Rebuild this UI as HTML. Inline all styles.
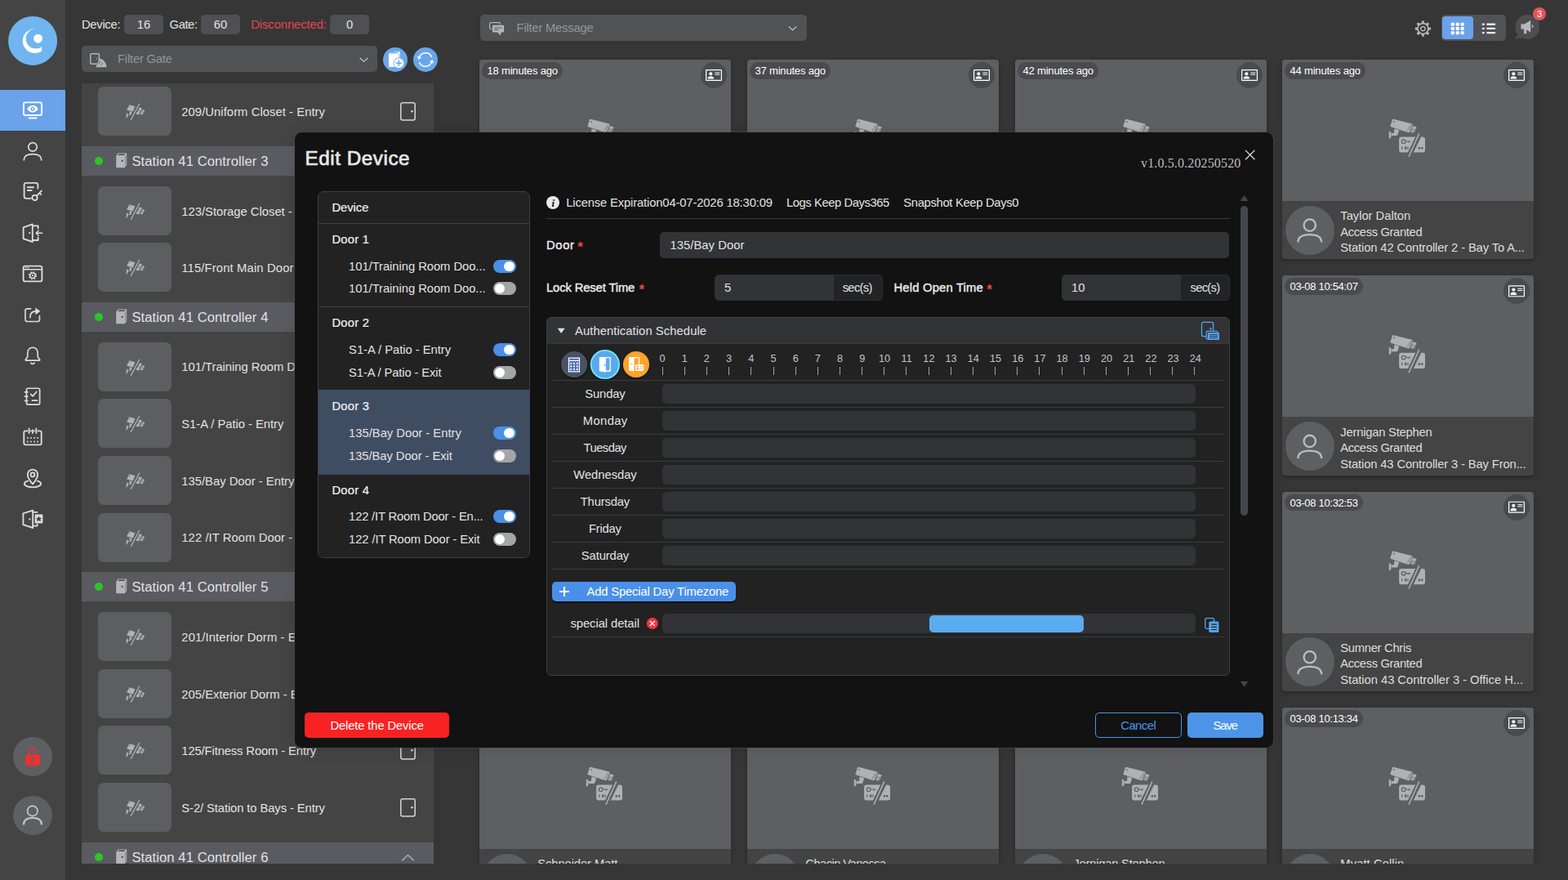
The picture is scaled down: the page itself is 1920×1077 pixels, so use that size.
<!DOCTYPE html>
<html lang="en"><head><meta charset="utf-8"><title>Edit Device</title>
<style>
*{box-sizing:border-box;margin:0;padding:0}
html,body{width:1920px;height:1077px;overflow:hidden;background:#363636}
body{position:relative;font-family:"Liberation Sans",sans-serif;color:#e2e2e2}
.a{position:absolute}
.t{white-space:nowrap}
svg{display:block;overflow:visible}
</style></head><body>
<div class="a" style="left:0px;top:0px;width:80px;height:1077px;background:#444444;"></div>
<svg class="a" style="left:10px;top:20px;" width="60" height="60" viewBox="0 0 60 60"><defs><clipPath id="lc"><rect x="0" y="0" width="41.15" height="60"/></clipPath></defs><circle cx="30.1" cy="29.9" r="30" fill="#70b5f0"/><circle cx="32.7" cy="30.1" r="14.95" fill="#ffffff" clip-path="url(#lc)"/><circle cx="33.87" cy="27.3" r="12.2" fill="#70b5f0"/><circle cx="36.6" cy="27.2" r="5.5" fill="#ffffff"/></svg>
<div class="a" style="left:0px;top:110px;width:80px;height:50px;background:#6aa3ea;"></div>
<svg class="a" style="left:26px;top:121px;" width="28" height="28" viewBox="0 0 28 28"><rect x="2.9" y="4.4" width="22.2" height="15.6" rx="2" fill="none" stroke="#ffffff" stroke-width="1.9" stroke-linecap="round" stroke-linejoin="round" /><path d="M9.5 23.4H18.5" fill="none" stroke="#ffffff" stroke-width="2" stroke-linecap="round" stroke-linejoin="round" /><path d="M7.2 12.2C9.2 8.9 11.6 8 14 8s4.8 0.9 6.8 4.2C18.8 15.5 16.4 16.4 14 16.4S9.2 15.5 7.2 12.2Z" fill="#ffffff"/><circle cx="14" cy="12.2" r="2.5" fill="#6aa3ea"/><circle cx="14" cy="12.2" r="1.1" fill="#ffffff"/></svg>
<svg class="a" style="left:26px;top:171px;" width="28" height="28" viewBox="0 0 28 28"><circle cx="14" cy="8.9" r="5.2" fill="none" stroke="#dcdcdc" stroke-width="1.7" stroke-linecap="round" stroke-linejoin="round" /><path d="M3.3 24.8C3.3 19.3 8 17.6 14 17.6S24.7 19.3 24.7 24.8" fill="none" stroke="#dcdcdc" stroke-width="1.7" stroke-linecap="round" stroke-linejoin="round" /></svg>
<svg class="a" style="left:26px;top:221px;" width="28" height="28" viewBox="0 0 28 28"><path d="M20.4 9.5V5.2a2.4 2.4 0 0 0-2.4-2.4H6a2.4 2.4 0 0 0-2.4 2.4V19.4a2.4 2.4 0 0 0 2.4 2.4H11.8" fill="none" stroke="#dcdcdc" stroke-width="1.85" stroke-linecap="round" stroke-linejoin="round" /><path d="M7.8 8.3H15M7.8 12H12.6" fill="none" stroke="#dcdcdc" stroke-width="2" stroke-linecap="round" stroke-linejoin="round" /><circle cx="16.6" cy="21" r="3.1" fill="none" stroke="#dcdcdc" stroke-width="1.85" stroke-linecap="round" stroke-linejoin="round" /><path d="M18.9 18.8L25 12.4M22.3 15.2l2 1.9" fill="none" stroke="#dcdcdc" stroke-width="1.85" stroke-linecap="round" stroke-linejoin="round" /></svg>
<svg class="a" style="left:26px;top:271px;" width="28" height="28" viewBox="0 0 28 28"><path d="M2.6 7.4L13.8 3.4V25L2.6 21.2Z" fill="none" stroke="#dcdcdc" stroke-width="1.85" stroke-linecap="round" stroke-linejoin="round" /><circle cx="10.3" cy="14.2" r="1.1" fill="#dcdcdc"/><path d="M13.8 5.4H20.6V8.6M20.6 19.6V23H13.8" fill="none" stroke="#dcdcdc" stroke-width="1.85" stroke-linecap="round" stroke-linejoin="round" /><path d="M25.8 14.2H18.2M21.2 11.2L18.2 14.2L21.2 17.2" fill="none" stroke="#dcdcdc" stroke-width="1.5" stroke-linecap="round" stroke-linejoin="round" /></svg>
<svg class="a" style="left:26px;top:321px;" width="28" height="28" viewBox="0 0 28 28"><rect x="2.6" y="4.6" width="22.8" height="18.8" rx="2.2" fill="none" stroke="#dcdcdc" stroke-width="1.85" stroke-linecap="round" stroke-linejoin="round" /><path d="M2.6 8.8H25.4" fill="none" stroke="#dcdcdc" stroke-width="1.5" stroke-linecap="round" stroke-linejoin="round" /><path d="M5.4 6.6h1M8.2 6.6h1" fill="none" stroke="#dcdcdc" stroke-width="1.2" stroke-linecap="round" stroke-linejoin="round" /><circle cx="14" cy="16.2" r="4.1" fill="none" stroke="#dcdcdc" stroke-width="2" stroke-dasharray="1.7 1.52"/><circle cx="14" cy="16.2" r="3.1" fill="none" stroke="#dcdcdc" stroke-width="1.3" stroke-linecap="round" stroke-linejoin="round" /><circle cx="14" cy="16.2" r="1.1" fill="#dcdcdc"/></svg>
<svg class="a" style="left:26px;top:371px;" width="28" height="28" viewBox="0 0 28 28"><g transform="translate(14 14.4) scale(0.9) translate(-14 -14)"><path d="M11.5 5.6H6.6a2.6 2.6 0 0 0-2.6 2.6V20.4a2.6 2.6 0 0 0 2.6 2.6H20.8a2.6 2.6 0 0 0 2.6-2.6V15.4" fill="none" stroke="#dcdcdc" stroke-width="1.85" stroke-linecap="round" stroke-linejoin="round" /><path d="M10.6 17.4C10.6 11.6 13.6 9 18.6 9" fill="none" stroke="#dcdcdc" stroke-width="1.9" stroke-linecap="round" stroke-linejoin="round" /><path d="M17.8 4.2L24.4 9L17.8 13.8Z" fill="#dcdcdc"/></g></svg>
<svg class="a" style="left:26px;top:421px;" width="28" height="28" viewBox="0 0 28 28"><g transform="translate(14 14) scale(0.9) translate(-14 -14)"><path d="M14 3.2c-4.4 0-6.9 3.4-6.9 7.6v4.4c0 1.6-1.5 2.8-2.7 4.2v1.4H23.6v-1.4c-1.2-1.4-2.7-2.6-2.7-4.2V10.8c0-4.2-2.5-7.6-6.9-7.6Z" fill="none" stroke="#dcdcdc" stroke-width="1.85" stroke-linecap="round" stroke-linejoin="round" /><path d="M11.6 24.2a2.5 1.8 0 0 0 4.8 0" fill="none" stroke="#dcdcdc" stroke-width="1.85" stroke-linecap="round" stroke-linejoin="round" /></g></svg>
<svg class="a" style="left:26px;top:471px;" width="28" height="28" viewBox="0 0 28 28"><g transform="translate(14 14) scale(0.92) translate(-14 -14)"><rect x="5.8" y="3.4" width="17.6" height="21.6" rx="2" fill="none" stroke="#dcdcdc" stroke-width="1.85" stroke-linecap="round" stroke-linejoin="round" /><path d="M3.6 8.4H7.4M3.6 14.2H7.4M3.6 20H7.4" fill="none" stroke="#dcdcdc" stroke-width="1.85" stroke-linecap="round" stroke-linejoin="round" /><path d="M11.4 11.2l2.6 2.6l5.2-5.8" fill="none" stroke="#dcdcdc" stroke-width="1.9" stroke-linecap="round" stroke-linejoin="round" /><path d="M13.4 19.6H20" fill="none" stroke="#dcdcdc" stroke-width="1.85" stroke-linecap="round" stroke-linejoin="round" /></g></svg>
<svg class="a" style="left:26px;top:521px;" width="28" height="28" viewBox="0 0 28 28"><path d="M7.4 6.4H5.4a2.1 2.1 0 0 0-2.1 2.1V21.3a2.1 2.1 0 0 0 2.1 2.1H22.6a2.1 2.1 0 0 0 2.1-2.1V8.5a2.1 2.1 0 0 0-2.1-2.1H20.6" fill="none" stroke="#dcdcdc" stroke-width="1.85" stroke-linecap="round" stroke-linejoin="round" /><path d="M9.6 3.4V9M18.4 3.4V9M14 5.2V9M11.8 6.4H12M16 6.4h0.2" fill="none" stroke="#dcdcdc" stroke-width="1.85" stroke-linecap="round" stroke-linejoin="round" /><circle cx="7.8" cy="15" r="1" fill="#dcdcdc"/><circle cx="11.9" cy="15" r="1" fill="#dcdcdc"/><circle cx="16.1" cy="15" r="1" fill="#dcdcdc"/><circle cx="20.2" cy="15" r="1" fill="#dcdcdc"/><circle cx="7.8" cy="19.6" r="1" fill="#dcdcdc"/><circle cx="11.9" cy="19.6" r="1" fill="#dcdcdc"/><circle cx="16.1" cy="19.6" r="1" fill="#dcdcdc"/><circle cx="20.2" cy="19.6" r="1" fill="#dcdcdc"/></svg>
<svg class="a" style="left:26px;top:571px;" width="28" height="28" viewBox="0 0 28 28"><path d="M14 21.4C10 17 7.8 13.4 7.8 9.8a6.2 6.2 0 0 1 12.4 0C20.2 13.4 18 17 14 21.4Z" fill="none" stroke="#dcdcdc" stroke-width="1.85" stroke-linecap="round" stroke-linejoin="round" /><circle cx="14" cy="9.9" r="2.5" fill="none" stroke="#dcdcdc" stroke-width="1.85" stroke-linecap="round" stroke-linejoin="round" /><path d="M8.2 17.6C5.6 18.4 3.8 19.7 3.8 21.1c0 2.4 4.6 4.2 10.2 4.2s10.2-1.8 10.2-4.2c0-1.4-1.8-2.7-4.4-3.5" fill="none" stroke="#dcdcdc" stroke-width="1.85" stroke-linecap="round" stroke-linejoin="round" /></svg>
<svg class="a" style="left:26px;top:621px;" width="28" height="28" viewBox="0 0 28 28"><path d="M2.4 7.4L14.2 3.6V25L2.4 21.2Z" fill="none" stroke="#dcdcdc" stroke-width="1.85" stroke-linecap="round" stroke-linejoin="round" /><circle cx="10.4" cy="14.4" r="1.1" fill="#dcdcdc"/><path d="M14.2 5.8H19.6M14.2 22.6H19.6V21" fill="none" stroke="#dcdcdc" stroke-width="1.85" stroke-linecap="round" stroke-linejoin="round" /><rect x="16.6" y="8.6" width="9.8" height="10.8" rx="1" fill="#dcdcdc"/><path d="M21.5 10.4l1.1 2.3l2.5 0.3l-1.8 1.7l0.5 2.5l-2.3-1.2l-2.3 1.2l0.5-2.5l-1.8-1.7l2.5-0.3Z" fill="#444444"/></svg>
<div class="a" style="left:16px;top:902px;width:48px;height:48px;background:#5e5f63;border-radius:24px;"></div>
<svg class="a" style="left:26px;top:911px;" width="28" height="28" viewBox="0 0 28 28"><path d="M9.9 13.4V8.9a3.95 3.95 0 0 1 7.9 0V13.4" fill="none" stroke="#ee3030" stroke-width="1.7"/><rect x="5" y="13" width="18.1" height="12.7" rx="2.6" fill="#ee3030"/><circle cx="13.9" cy="17.3" r="1.35" fill="#5e5f63"/><path d="M13.1 19h1.6l0.5 3.2h-2.6Z" fill="#5e5f63"/></svg>
<div class="a" style="left:16px;top:974px;width:48px;height:48px;background:#5e5f63;border-radius:24px;"></div>
<svg class="a" style="left:26px;top:984px;" width="28" height="28" viewBox="0 0 28 28"><circle cx="13.8" cy="8.5" r="6.2" fill="none" stroke="#c6c6c8" stroke-width="1.7"/><path d="M3 25.4C3 19.4 7.6 17 14 17S25 19.4 25 25.4" fill="none" stroke="#c6c6c8" stroke-width="2.2"/></svg>
<div class="a t" style="top:22px;font-size:14.78px;line-height:16px;color:#e2e2e2;letter-spacing:-0.292px;left:100px;">Device:</div>
<div class="a" style="left:152px;top:18px;width:48px;height:24px;background:#4f5054;border-radius:5px;"></div>
<div class="a t" style="top:22px;font-size:14.78px;line-height:16px;color:#e2e2e2;left:-24px;width:400px;text-align:center;">16</div>
<div class="a t" style="top:22px;font-size:14.78px;line-height:16px;color:#e2e2e2;letter-spacing:-0.431px;left:207.6px;">Gate:</div>
<div class="a" style="left:246px;top:18px;width:48px;height:24px;background:#4f5054;border-radius:5px;"></div>
<div class="a t" style="top:22px;font-size:14.78px;line-height:16px;color:#e2e2e2;left:70px;width:400px;text-align:center;">60</div>
<div class="a t" style="top:22px;font-size:14.78px;line-height:16px;color:#e8474a;letter-spacing:-0.065px;left:307.2px;">Disconnected:</div>
<div class="a" style="left:404px;top:18px;width:48px;height:24px;background:#4f5054;border-radius:5px;"></div>
<div class="a t" style="top:22px;font-size:14.78px;line-height:16px;color:#e2e2e2;left:228px;width:400px;text-align:center;">0</div>
<div class="a" style="left:100px;top:56px;width:362px;height:32px;background:#515256;border-radius:5px;"></div>
<svg class="a" style="left:110px;top:65px;" width="22" height="18" viewBox="0 0 22 18"><rect x="0.8" y="0.8" width="10.6" height="12.4" rx="1.2" fill="none" stroke="#b4b4b4" stroke-width="1.4" stroke-linecap="round" stroke-linejoin="round" /><circle cx="8.8" cy="6.8" r="0.8" fill="#b4b4b4"/><path d="M7.4 17.2L12.2 6.6C17 8 20 12 20.6 17.2Z" fill="#b4b4b4"/><path d="M10.6 14.2l2.6-5M14 15l1.6-3.4" stroke="#515256" stroke-width="0.8" fill="none"/></svg>
<div class="a t" style="top:64px;font-size:14.78px;line-height:16px;color:#949598;letter-spacing:-0.194px;left:144px;">Filter Gate</div>
<svg class="a" style="left:439px;top:70px;" width="13" height="8" viewBox="0 0 13 8"><g transform="translate(0.5 0)"><path d="M1.5 1.2L6 5.4L10.5 1.2" fill="none" stroke="#b8c6dc" stroke-width="1.25" stroke-linecap="round" stroke-linejoin="round"/></g></svg>
<svg class="a" style="left:469px;top:58px;" width="30" height="30" viewBox="0 0 30 30"><circle cx="15" cy="15" r="15" fill="#68a6ec"/><path d="M6.9 9a2.4 2.4 0 0 1 2-2.4L19 4.9a1.8 1.8 0 0 1 2 1.8V24H6.9Z" fill="#ffffff"/><path d="M9.6 7.1L18.6 6.3" stroke="#68a6ec" stroke-width="1.3"/><path d="M19.8 7.4V14" stroke="#68a6ec" stroke-width="0.9"/><circle cx="19.4" cy="19.2" r="6.3" fill="#ffffff" stroke="#68a6ec" stroke-width="0.9"/><path d="M15.6 19.2h7.6M19.4 15.4v7.6" stroke="#68a6ec" stroke-width="1.5"/></svg>
<svg class="a" style="left:506px;top:58px;" width="30" height="30" viewBox="0 0 30 30"><circle cx="15" cy="15" r="15" fill="#68a6ec"/><path d="M7.4 12.2A8.1 8.1 0 0 1 22.4 11.4" fill="none" stroke="#fff" stroke-width="1.5" stroke-linecap="round"/><path d="M22.6 17.8A8.1 8.1 0 0 1 7.6 18.6" fill="none" stroke="#fff" stroke-width="1.5" stroke-linecap="round"/><path d="M4.8 10.6L10 12.2L6.6 15.2Z" fill="#fff"/><path d="M25.2 19.4L20 17.8L23.4 14.8Z" fill="#fff"/></svg>
<div class="a" style="left:100px;top:102px;width:431px;height:955px;background:#444444;"></div>
<div class="a" style="left:120px;top:106px;width:90px;height:60px;background:#5d5e62;border-radius:7px;"></div>
<svg class="a" style="left:153px;top:126px;" width="25" height="22" viewBox="0 0 25 22"><g transform="translate(0.8 0.6)"><g fill="#b2b3b6"><path d="M4.4 1.6L11.6 3.6L9 9.8L1.4 8Z"/><path d="M4.6 9.6L7.8 10.4L6.6 14.2H3.4L1.6 17.8L0.6 17.6L1.2 11.8l1.2 0.4l0.6 1.2H5Z"/><path d="M17 4.6L20.2 5.8L16.2 13.8L12.6 12.8Z"/><path d="M20.8 7.4L23.4 8.6L20.4 14L17.8 13Z"/></g><path d="M16.8 0.6L6.6 19.8" stroke="#b2b3b6" stroke-width="1.2" stroke-linecap="round"/><circle cx="4.8" cy="3.8" r="0.6" fill="#5d5e62"/><path d="M16 7l-1.6 3.4M18 8l-1.4 3M21.2 9.6l-1.2 2.4" stroke="#5d5e62" stroke-width="0.7"/></g></svg>
<div class="a t" style="top:129px;font-size:14.78px;line-height:16px;color:#e2e2e2;letter-spacing:0.069px;left:222.3px;">209/Uniform Closet - Entry</div>
<svg class="a" style="left:490px;top:125px;" width="19" height="23" viewBox="0 0 19 23"><rect x="0.8" y="0.8" width="17.4" height="21.2" rx="2.2" fill="none" stroke="#d6d6d6" stroke-width="1.5" stroke-linecap="round" stroke-linejoin="round" /><circle cx="14.4" cy="11.3" r="1.3" fill="#d6d6d6"/></svg>
<div class="a" style="left:100px;top:179px;width:431px;height:36px;background:#5a5b61;"></div>
<div class="a" style="left:115.8px;top:191.7px;width:10.4px;height:10.4px;background:#2fc427;border-radius:5.2px;"></div>
<svg class="a" style="left:142px;top:187px;" width="14" height="19" viewBox="0 0 14 19"><path d="M0.2 4L2.6 0.5H13.2V14.8L10.6 18.2H1.2a1 1 0 0 1-1-1Z" fill="#b5b5b9"/><path d="M2.4 3L3.5 1.4H11.5L10.2 3Z" fill="#47484d"/><path d="M11.5 4L12.3 2.9V14.4L11.5 15.5Z" fill="#6a6b70"/><circle cx="7.7" cy="9.9" r="1.15" fill="#47484d"/></svg>
<div class="a t" style="top:188px;font-size:16.61px;line-height:19px;color:#e2e2e2;letter-spacing:0.078px;left:161.4px;">Station 41 Controller 3</div>
<div class="a" style="left:120px;top:228px;width:90px;height:60px;background:#5d5e62;border-radius:7px;"></div>
<svg class="a" style="left:153px;top:248px;" width="25" height="22" viewBox="0 0 25 22"><g transform="translate(0.8 0.6)"><g fill="#b2b3b6"><path d="M4.4 1.6L11.6 3.6L9 9.8L1.4 8Z"/><path d="M4.6 9.6L7.8 10.4L6.6 14.2H3.4L1.6 17.8L0.6 17.6L1.2 11.8l1.2 0.4l0.6 1.2H5Z"/><path d="M17 4.6L20.2 5.8L16.2 13.8L12.6 12.8Z"/><path d="M20.8 7.4L23.4 8.6L20.4 14L17.8 13Z"/></g><path d="M16.8 0.6L6.6 19.8" stroke="#b2b3b6" stroke-width="1.2" stroke-linecap="round"/><circle cx="4.8" cy="3.8" r="0.6" fill="#5d5e62"/><path d="M16 7l-1.6 3.4M18 8l-1.4 3M21.2 9.6l-1.2 2.4" stroke="#5d5e62" stroke-width="0.7"/></g></svg>
<div class="a t" style="top:251px;font-size:14.78px;line-height:16px;color:#e2e2e2;left:222.3px;">123/Storage Closet - Entry</div>
<svg class="a" style="left:490px;top:247px;" width="19" height="23" viewBox="0 0 19 23"><rect x="0.8" y="0.8" width="17.4" height="21.2" rx="2.2" fill="none" stroke="#d6d6d6" stroke-width="1.5" stroke-linecap="round" stroke-linejoin="round" /><circle cx="14.4" cy="11.3" r="1.3" fill="#d6d6d6"/></svg>
<div class="a" style="left:120px;top:297px;width:90px;height:60px;background:#5d5e62;border-radius:7px;"></div>
<svg class="a" style="left:153px;top:317px;" width="25" height="22" viewBox="0 0 25 22"><g transform="translate(0.8 0.6)"><g fill="#b2b3b6"><path d="M4.4 1.6L11.6 3.6L9 9.8L1.4 8Z"/><path d="M4.6 9.6L7.8 10.4L6.6 14.2H3.4L1.6 17.8L0.6 17.6L1.2 11.8l1.2 0.4l0.6 1.2H5Z"/><path d="M17 4.6L20.2 5.8L16.2 13.8L12.6 12.8Z"/><path d="M20.8 7.4L23.4 8.6L20.4 14L17.8 13Z"/></g><path d="M16.8 0.6L6.6 19.8" stroke="#b2b3b6" stroke-width="1.2" stroke-linecap="round"/><circle cx="4.8" cy="3.8" r="0.6" fill="#5d5e62"/><path d="M16 7l-1.6 3.4M18 8l-1.4 3M21.2 9.6l-1.2 2.4" stroke="#5d5e62" stroke-width="0.7"/></g></svg>
<div class="a t" style="top:320px;font-size:14.78px;line-height:16px;color:#e2e2e2;letter-spacing:0.157px;left:222.3px;">115/Front Main Door - Entry</div>
<svg class="a" style="left:490px;top:316px;" width="19" height="23" viewBox="0 0 19 23"><rect x="0.8" y="0.8" width="17.4" height="21.2" rx="2.2" fill="none" stroke="#d6d6d6" stroke-width="1.5" stroke-linecap="round" stroke-linejoin="round" /><circle cx="14.4" cy="11.3" r="1.3" fill="#d6d6d6"/></svg>
<div class="a" style="left:100px;top:370px;width:431px;height:36px;background:#5a5b61;"></div>
<div class="a" style="left:115.8px;top:382.7px;width:10.4px;height:10.4px;background:#2fc427;border-radius:5.2px;"></div>
<svg class="a" style="left:142px;top:378px;" width="14" height="19" viewBox="0 0 14 19"><path d="M0.2 4L2.6 0.5H13.2V14.8L10.6 18.2H1.2a1 1 0 0 1-1-1Z" fill="#b5b5b9"/><path d="M2.4 3L3.5 1.4H11.5L10.2 3Z" fill="#47484d"/><path d="M11.5 4L12.3 2.9V14.4L11.5 15.5Z" fill="#6a6b70"/><circle cx="7.7" cy="9.9" r="1.15" fill="#47484d"/></svg>
<div class="a t" style="top:379px;font-size:16.61px;line-height:19px;color:#e2e2e2;letter-spacing:0.078px;left:161.4px;">Station 41 Controller 4</div>
<div class="a" style="left:120px;top:419px;width:90px;height:60px;background:#5d5e62;border-radius:7px;"></div>
<svg class="a" style="left:153px;top:439px;" width="25" height="22" viewBox="0 0 25 22"><g transform="translate(0.8 0.6)"><g fill="#b2b3b6"><path d="M4.4 1.6L11.6 3.6L9 9.8L1.4 8Z"/><path d="M4.6 9.6L7.8 10.4L6.6 14.2H3.4L1.6 17.8L0.6 17.6L1.2 11.8l1.2 0.4l0.6 1.2H5Z"/><path d="M17 4.6L20.2 5.8L16.2 13.8L12.6 12.8Z"/><path d="M20.8 7.4L23.4 8.6L20.4 14L17.8 13Z"/></g><path d="M16.8 0.6L6.6 19.8" stroke="#b2b3b6" stroke-width="1.2" stroke-linecap="round"/><circle cx="4.8" cy="3.8" r="0.6" fill="#5d5e62"/><path d="M16 7l-1.6 3.4M18 8l-1.4 3M21.2 9.6l-1.2 2.4" stroke="#5d5e62" stroke-width="0.7"/></g></svg>
<div class="a t" style="top:441px;font-size:14.78px;line-height:16px;color:#e2e2e2;letter-spacing:-0.008px;left:222.3px;">101/Training Room Door - Entry</div>
<svg class="a" style="left:490px;top:438px;" width="19" height="23" viewBox="0 0 19 23"><rect x="0.8" y="0.8" width="17.4" height="21.2" rx="2.2" fill="none" stroke="#d6d6d6" stroke-width="1.5" stroke-linecap="round" stroke-linejoin="round" /><circle cx="14.4" cy="11.3" r="1.3" fill="#d6d6d6"/></svg>
<div class="a" style="left:120px;top:488px;width:90px;height:60px;background:#5d5e62;border-radius:7px;"></div>
<svg class="a" style="left:153px;top:508px;" width="25" height="22" viewBox="0 0 25 22"><g transform="translate(0.8 0.6)"><g fill="#b2b3b6"><path d="M4.4 1.6L11.6 3.6L9 9.8L1.4 8Z"/><path d="M4.6 9.6L7.8 10.4L6.6 14.2H3.4L1.6 17.8L0.6 17.6L1.2 11.8l1.2 0.4l0.6 1.2H5Z"/><path d="M17 4.6L20.2 5.8L16.2 13.8L12.6 12.8Z"/><path d="M20.8 7.4L23.4 8.6L20.4 14L17.8 13Z"/></g><path d="M16.8 0.6L6.6 19.8" stroke="#b2b3b6" stroke-width="1.2" stroke-linecap="round"/><circle cx="4.8" cy="3.8" r="0.6" fill="#5d5e62"/><path d="M16 7l-1.6 3.4M18 8l-1.4 3M21.2 9.6l-1.2 2.4" stroke="#5d5e62" stroke-width="0.7"/></g></svg>
<div class="a t" style="top:511px;font-size:14.78px;line-height:16px;color:#e2e2e2;letter-spacing:-0.03px;left:222.3px;">S1-A / Patio - Entry</div>
<svg class="a" style="left:490px;top:507px;" width="19" height="23" viewBox="0 0 19 23"><rect x="0.8" y="0.8" width="17.4" height="21.2" rx="2.2" fill="none" stroke="#d6d6d6" stroke-width="1.5" stroke-linecap="round" stroke-linejoin="round" /><circle cx="14.4" cy="11.3" r="1.3" fill="#d6d6d6"/></svg>
<div class="a" style="left:120px;top:558px;width:90px;height:60px;background:#5d5e62;border-radius:7px;"></div>
<svg class="a" style="left:153px;top:578px;" width="25" height="22" viewBox="0 0 25 22"><g transform="translate(0.8 0.6)"><g fill="#b2b3b6"><path d="M4.4 1.6L11.6 3.6L9 9.8L1.4 8Z"/><path d="M4.6 9.6L7.8 10.4L6.6 14.2H3.4L1.6 17.8L0.6 17.6L1.2 11.8l1.2 0.4l0.6 1.2H5Z"/><path d="M17 4.6L20.2 5.8L16.2 13.8L12.6 12.8Z"/><path d="M20.8 7.4L23.4 8.6L20.4 14L17.8 13Z"/></g><path d="M16.8 0.6L6.6 19.8" stroke="#b2b3b6" stroke-width="1.2" stroke-linecap="round"/><circle cx="4.8" cy="3.8" r="0.6" fill="#5d5e62"/><path d="M16 7l-1.6 3.4M18 8l-1.4 3M21.2 9.6l-1.2 2.4" stroke="#5d5e62" stroke-width="0.7"/></g></svg>
<div class="a t" style="top:581px;font-size:14.78px;line-height:16px;color:#e2e2e2;letter-spacing:0.007px;left:222.3px;">135/Bay Door - Entry</div>
<svg class="a" style="left:490px;top:577px;" width="19" height="23" viewBox="0 0 19 23"><rect x="0.8" y="0.8" width="17.4" height="21.2" rx="2.2" fill="none" stroke="#d6d6d6" stroke-width="1.5" stroke-linecap="round" stroke-linejoin="round" /><circle cx="14.4" cy="11.3" r="1.3" fill="#d6d6d6"/></svg>
<div class="a" style="left:120px;top:628px;width:90px;height:60px;background:#5d5e62;border-radius:7px;"></div>
<svg class="a" style="left:153px;top:648px;" width="25" height="22" viewBox="0 0 25 22"><g transform="translate(0.8 0.6)"><g fill="#b2b3b6"><path d="M4.4 1.6L11.6 3.6L9 9.8L1.4 8Z"/><path d="M4.6 9.6L7.8 10.4L6.6 14.2H3.4L1.6 17.8L0.6 17.6L1.2 11.8l1.2 0.4l0.6 1.2H5Z"/><path d="M17 4.6L20.2 5.8L16.2 13.8L12.6 12.8Z"/><path d="M20.8 7.4L23.4 8.6L20.4 14L17.8 13Z"/></g><path d="M16.8 0.6L6.6 19.8" stroke="#b2b3b6" stroke-width="1.2" stroke-linecap="round"/><circle cx="4.8" cy="3.8" r="0.6" fill="#5d5e62"/><path d="M16 7l-1.6 3.4M18 8l-1.4 3M21.2 9.6l-1.2 2.4" stroke="#5d5e62" stroke-width="0.7"/></g></svg>
<div class="a t" style="top:650px;font-size:14.78px;line-height:16px;color:#e2e2e2;letter-spacing:0.088px;left:222.3px;">122 /IT Room Door - Entry</div>
<svg class="a" style="left:490px;top:647px;" width="19" height="23" viewBox="0 0 19 23"><rect x="0.8" y="0.8" width="17.4" height="21.2" rx="2.2" fill="none" stroke="#d6d6d6" stroke-width="1.5" stroke-linecap="round" stroke-linejoin="round" /><circle cx="14.4" cy="11.3" r="1.3" fill="#d6d6d6"/></svg>
<div class="a" style="left:100px;top:700px;width:431px;height:36px;background:#5a5b61;"></div>
<div class="a" style="left:115.8px;top:712.7px;width:10.4px;height:10.4px;background:#2fc427;border-radius:5.2px;"></div>
<svg class="a" style="left:142px;top:708px;" width="14" height="19" viewBox="0 0 14 19"><path d="M0.2 4L2.6 0.5H13.2V14.8L10.6 18.2H1.2a1 1 0 0 1-1-1Z" fill="#b5b5b9"/><path d="M2.4 3L3.5 1.4H11.5L10.2 3Z" fill="#47484d"/><path d="M11.5 4L12.3 2.9V14.4L11.5 15.5Z" fill="#6a6b70"/><circle cx="7.7" cy="9.9" r="1.15" fill="#47484d"/></svg>
<div class="a t" style="top:709px;font-size:16.61px;line-height:19px;color:#e2e2e2;letter-spacing:0.078px;left:161.4px;">Station 41 Controller 5</div>
<div class="a" style="left:120px;top:749px;width:90px;height:60px;background:#5d5e62;border-radius:7px;"></div>
<svg class="a" style="left:153px;top:769px;" width="25" height="22" viewBox="0 0 25 22"><g transform="translate(0.8 0.6)"><g fill="#b2b3b6"><path d="M4.4 1.6L11.6 3.6L9 9.8L1.4 8Z"/><path d="M4.6 9.6L7.8 10.4L6.6 14.2H3.4L1.6 17.8L0.6 17.6L1.2 11.8l1.2 0.4l0.6 1.2H5Z"/><path d="M17 4.6L20.2 5.8L16.2 13.8L12.6 12.8Z"/><path d="M20.8 7.4L23.4 8.6L20.4 14L17.8 13Z"/></g><path d="M16.8 0.6L6.6 19.8" stroke="#b2b3b6" stroke-width="1.2" stroke-linecap="round"/><circle cx="4.8" cy="3.8" r="0.6" fill="#5d5e62"/><path d="M16 7l-1.6 3.4M18 8l-1.4 3M21.2 9.6l-1.2 2.4" stroke="#5d5e62" stroke-width="0.7"/></g></svg>
<div class="a t" style="top:772px;font-size:14.78px;line-height:16px;color:#e2e2e2;letter-spacing:0.126px;left:222.3px;">201/Interior Dorm - Entry</div>
<svg class="a" style="left:490px;top:768px;" width="19" height="23" viewBox="0 0 19 23"><rect x="0.8" y="0.8" width="17.4" height="21.2" rx="2.2" fill="none" stroke="#d6d6d6" stroke-width="1.5" stroke-linecap="round" stroke-linejoin="round" /><circle cx="14.4" cy="11.3" r="1.3" fill="#d6d6d6"/></svg>
<div class="a" style="left:120px;top:819px;width:90px;height:60px;background:#5d5e62;border-radius:7px;"></div>
<svg class="a" style="left:153px;top:839px;" width="25" height="22" viewBox="0 0 25 22"><g transform="translate(0.8 0.6)"><g fill="#b2b3b6"><path d="M4.4 1.6L11.6 3.6L9 9.8L1.4 8Z"/><path d="M4.6 9.6L7.8 10.4L6.6 14.2H3.4L1.6 17.8L0.6 17.6L1.2 11.8l1.2 0.4l0.6 1.2H5Z"/><path d="M17 4.6L20.2 5.8L16.2 13.8L12.6 12.8Z"/><path d="M20.8 7.4L23.4 8.6L20.4 14L17.8 13Z"/></g><path d="M16.8 0.6L6.6 19.8" stroke="#b2b3b6" stroke-width="1.2" stroke-linecap="round"/><circle cx="4.8" cy="3.8" r="0.6" fill="#5d5e62"/><path d="M16 7l-1.6 3.4M18 8l-1.4 3M21.2 9.6l-1.2 2.4" stroke="#5d5e62" stroke-width="0.7"/></g></svg>
<div class="a t" style="top:842px;font-size:14.78px;line-height:16px;color:#e2e2e2;letter-spacing:0.025px;left:222.3px;">205/Exterior Dorm - Entry</div>
<svg class="a" style="left:490px;top:838px;" width="19" height="23" viewBox="0 0 19 23"><rect x="0.8" y="0.8" width="17.4" height="21.2" rx="2.2" fill="none" stroke="#d6d6d6" stroke-width="1.5" stroke-linecap="round" stroke-linejoin="round" /><circle cx="14.4" cy="11.3" r="1.3" fill="#d6d6d6"/></svg>
<div class="a" style="left:120px;top:888px;width:90px;height:60px;background:#5d5e62;border-radius:7px;"></div>
<svg class="a" style="left:153px;top:908px;" width="25" height="22" viewBox="0 0 25 22"><g transform="translate(0.8 0.6)"><g fill="#b2b3b6"><path d="M4.4 1.6L11.6 3.6L9 9.8L1.4 8Z"/><path d="M4.6 9.6L7.8 10.4L6.6 14.2H3.4L1.6 17.8L0.6 17.6L1.2 11.8l1.2 0.4l0.6 1.2H5Z"/><path d="M17 4.6L20.2 5.8L16.2 13.8L12.6 12.8Z"/><path d="M20.8 7.4L23.4 8.6L20.4 14L17.8 13Z"/></g><path d="M16.8 0.6L6.6 19.8" stroke="#b2b3b6" stroke-width="1.2" stroke-linecap="round"/><circle cx="4.8" cy="3.8" r="0.6" fill="#5d5e62"/><path d="M16 7l-1.6 3.4M18 8l-1.4 3M21.2 9.6l-1.2 2.4" stroke="#5d5e62" stroke-width="0.7"/></g></svg>
<div class="a t" style="top:911px;font-size:14.78px;line-height:16px;color:#e2e2e2;letter-spacing:-0.113px;left:222.3px;">125/Fitness Room - Entry</div>
<svg class="a" style="left:490px;top:907px;" width="19" height="23" viewBox="0 0 19 23"><rect x="0.8" y="0.8" width="17.4" height="21.2" rx="2.2" fill="none" stroke="#d6d6d6" stroke-width="1.5" stroke-linecap="round" stroke-linejoin="round" /><circle cx="14.4" cy="11.3" r="1.3" fill="#d6d6d6"/></svg>
<div class="a" style="left:120px;top:958px;width:90px;height:60px;background:#5d5e62;border-radius:7px;"></div>
<svg class="a" style="left:153px;top:978px;" width="25" height="22" viewBox="0 0 25 22"><g transform="translate(0.8 0.6)"><g fill="#b2b3b6"><path d="M4.4 1.6L11.6 3.6L9 9.8L1.4 8Z"/><path d="M4.6 9.6L7.8 10.4L6.6 14.2H3.4L1.6 17.8L0.6 17.6L1.2 11.8l1.2 0.4l0.6 1.2H5Z"/><path d="M17 4.6L20.2 5.8L16.2 13.8L12.6 12.8Z"/><path d="M20.8 7.4L23.4 8.6L20.4 14L17.8 13Z"/></g><path d="M16.8 0.6L6.6 19.8" stroke="#b2b3b6" stroke-width="1.2" stroke-linecap="round"/><circle cx="4.8" cy="3.8" r="0.6" fill="#5d5e62"/><path d="M16 7l-1.6 3.4M18 8l-1.4 3M21.2 9.6l-1.2 2.4" stroke="#5d5e62" stroke-width="0.7"/></g></svg>
<div class="a t" style="top:981px;font-size:14.78px;line-height:16px;color:#e2e2e2;letter-spacing:-0.092px;left:222.3px;">S-2/ Station to Bays - Entry</div>
<svg class="a" style="left:490px;top:977px;" width="19" height="23" viewBox="0 0 19 23"><rect x="0.8" y="0.8" width="17.4" height="21.2" rx="2.2" fill="none" stroke="#d6d6d6" stroke-width="1.5" stroke-linecap="round" stroke-linejoin="round" /><circle cx="14.4" cy="11.3" r="1.3" fill="#d6d6d6"/></svg>
<div class="a" style="left:0;top:0;width:560px;height:1057px;overflow:hidden">
<div class="a" style="left:100px;top:1031px;width:431px;height:36px;background:#5a5b61;"></div>
<div class="a" style="left:115.8px;top:1043.7px;width:10.4px;height:10.4px;background:#2fc427;border-radius:5.2px;"></div>
<svg class="a" style="left:142px;top:1039px;" width="14" height="19" viewBox="0 0 14 19"><path d="M0.2 4L2.6 0.5H13.2V14.8L10.6 18.2H1.2a1 1 0 0 1-1-1Z" fill="#b5b5b9"/><path d="M2.4 3L3.5 1.4H11.5L10.2 3Z" fill="#47484d"/><path d="M11.5 4L12.3 2.9V14.4L11.5 15.5Z" fill="#6a6b70"/><circle cx="7.7" cy="9.9" r="1.15" fill="#47484d"/></svg>
<div class="a t" style="top:1040px;font-size:16.61px;line-height:19px;color:#e2e2e2;letter-spacing:0.078px;left:161.4px;">Station 41 Controller 6</div>
<svg class="a" style="left:491px;top:1045px;" width="17" height="10" viewBox="0 0 17 10"><g transform="translate(0.5 0.5)"><path d="M1 7.4L8 1L15 7.4" fill="none" stroke="#a6b8d4" stroke-width="1.3" stroke-linecap="round" stroke-linejoin="round"/></g></svg>
</div>
<div class="a" style="left:588px;top:18px;width:400px;height:32px;background:#515256;border-radius:5px;"></div>
<svg class="a" style="left:598px;top:26px;" width="22" height="19" viewBox="0 0 22 19"><g transform="translate(0.6 0.4)"><rect x="1" y="1.3" width="12.7" height="7.8" rx="1.4" fill="none" stroke="#b6b6b9" stroke-width="1.2"/><rect x="3.5" y="3.5" width="15.8" height="10.5" rx="1.6" fill="#515256"/><path d="M5.7 4.3H17.1a1.4 1.4 0 0 1 1.4 1.4V11.8a1.4 1.4 0 0 1-1.4 1.4H15.2L13.9 16.8L10.4 13.2H5.7a1.4 1.4 0 0 1-1.4-1.4V5.7a1.4 1.4 0 0 1 1.4-1.4Z" fill="#b6b6b9"/><path d="M6.6 7.7H16.2M6.6 10.1H11.8" stroke="#515256" stroke-width="1"/></g></svg>
<div class="a t" style="top:26px;font-size:14.78px;line-height:16px;color:#949598;letter-spacing:-0.218px;left:632.6px;">Filter Message</div>
<svg class="a" style="left:964px;top:31px;" width="13" height="8" viewBox="0 0 13 8"><g transform="translate(0.6 0.4)"><path d="M1.5 1.2L6 5.4L10.5 1.2" fill="none" stroke="#b8c6dc" stroke-width="1.25" stroke-linecap="round" stroke-linejoin="round"/></g></svg>
<svg class="a" style="left:1731px;top:24px;" width="23" height="23" viewBox="0 0 23 23"><g transform="translate(0.4 0.1)"><g transform="translate(11 11)"><rect x="-1.6" y="-9.7" width="3.2" height="3.4" rx="1" fill="#b6b6b9" transform="rotate(0)"/><rect x="-1.6" y="-9.7" width="3.2" height="3.4" rx="1" fill="#b6b6b9" transform="rotate(45)"/><rect x="-1.6" y="-9.7" width="3.2" height="3.4" rx="1" fill="#b6b6b9" transform="rotate(90)"/><rect x="-1.6" y="-9.7" width="3.2" height="3.4" rx="1" fill="#b6b6b9" transform="rotate(135)"/><rect x="-1.6" y="-9.7" width="3.2" height="3.4" rx="1" fill="#b6b6b9" transform="rotate(180)"/><rect x="-1.6" y="-9.7" width="3.2" height="3.4" rx="1" fill="#b6b6b9" transform="rotate(225)"/><rect x="-1.6" y="-9.7" width="3.2" height="3.4" rx="1" fill="#b6b6b9" transform="rotate(270)"/><rect x="-1.6" y="-9.7" width="3.2" height="3.4" rx="1" fill="#b6b6b9" transform="rotate(315)"/><circle r="6.5" fill="none" stroke="#b6b6b9" stroke-width="1.7"/><circle r="2.7" fill="none" stroke="#b6b6b9" stroke-width="1.5"/></g></g></svg>
<div class="a" style="left:1764.5px;top:18px;width:79.5px;height:32px;background:#515256;border-radius:5px;"></div>
<div class="a" style="left:1766px;top:20px;width:38.2px;height:28px;background:#6aa3ea;border-radius:4px;"></div>
<svg class="a" style="left:1776px;top:27px;" width="18" height="16" viewBox="0 0 18 16"><g transform="translate(0.7 0.8)"><rect x="0" y="0" width="4.2" height="4" rx="1.1" fill="#ffffff"/><rect x="5.9" y="0" width="4.2" height="4" rx="1.1" fill="#ffffff"/><rect x="11.8" y="0" width="4.2" height="4" rx="1.1" fill="#ffffff"/><rect x="0" y="5.2" width="4.2" height="4" rx="1.1" fill="#ffffff"/><rect x="5.9" y="5.2" width="4.2" height="4" rx="1.1" fill="#ffffff"/><rect x="11.8" y="5.2" width="4.2" height="4" rx="1.1" fill="#ffffff"/><rect x="0" y="10.4" width="4.2" height="4" rx="1.1" fill="#ffffff"/><rect x="5.9" y="10.4" width="4.2" height="4" rx="1.1" fill="#ffffff"/><rect x="11.8" y="10.4" width="4.2" height="4" rx="1.1" fill="#ffffff"/></g></svg>
<svg class="a" style="left:1814px;top:27px;" width="18" height="16" viewBox="0 0 18 16"><g transform="translate(0.8 0.8)"><rect x="0" y="0.7" width="3" height="2.4" rx="0.8" fill="#f0f0f0"/><rect x="5.4" y="0.7" width="11" height="2.4" rx="1" fill="#f0f0f0"/><rect x="0" y="5.9" width="3" height="2.4" rx="0.8" fill="#f0f0f0"/><rect x="5.4" y="5.9" width="11" height="2.4" rx="1" fill="#f0f0f0"/><rect x="0" y="11.1" width="3" height="2.4" rx="0.8" fill="#f0f0f0"/><rect x="5.4" y="11.1" width="11" height="2.4" rx="1" fill="#f0f0f0"/></g></svg>
<svg class="a" style="left:1854px;top:17px;" width="33" height="33" viewBox="0 0 33 33"><g transform="translate(0.2 0)"><circle cx="16" cy="16" r="15" fill="#4d4e52"/><path d="M5 24L0.6 30.6L10.6 29.4Z" fill="#4d4e52"/><path d="M8.2 12.4h4.2L20 8V22.4l-5-2.9v4.7h-3.2V18.6H8.2Z" fill="#b8b8bb"/><path d="M21.6 12.6l2.2 2.6l-2.2 2.6Z" fill="#b8b8bb"/></g></svg>
<div class="a" style="left:1877px;top:9px;width:16px;height:16px;background:#e5535a;border-radius:8px;"></div>
<div class="a t" style="top:11px;font-size:11.04px;line-height:12px;color:#ffffff;left:1685px;width:400px;text-align:center;">3</div>
<div class="a" style="left:560px;top:60px;width:1360px;height:997px;overflow:hidden">
<div class="a" style="left:27px;top:13px;width:308px;height:244.33px;border-radius:4px;background:#444444;box-shadow:0 2px 5px rgba(0,0,0,.28);overflow:hidden">
<div class="a" style="left:0;top:0;width:308px;height:173px;background:#5e5f63"></div>
</div>
<svg class="a" style="left:157px;top:85px;" width="47" height="48.4" viewBox="0 0 47 48.4"><g transform="translate(0.4 0.3)"><g fill="#b0b1b5"><path d="M5.6 1.6L28 7.3L24.2 15.9L3.1 9Z" stroke="#b0b1b5" stroke-width="2.2" stroke-linejoin="round"/><path d="M29.6 8.6l4.6 1.6l-2.9 7.1l-4.9-1.2Z"/><path d="M7.2 12.2l5.6 1.7l-1.6 5.6a1.6 1.6 0 0 1-1.5 1.1H3.2V17.6H6.4Z"/><path d="M0.4 15.2l2.6 1.2v6.6l-2.6 1.4Z"/><rect x="12.7" y="22.1" width="31.9" height="19.2" rx="3"/></g><path d="M27.2 7.7L22.6 15.2" stroke="#5e5f63" stroke-width="0.7"/><circle cx="6.5" cy="3.8" r="0.9" fill="#5e5f63"/><path d="M29.8 11.4l-1.7 4.2M32.2 12.2l-1.7 4.2" stroke="#5e5f63" stroke-width="0.8"/><path d="M38.6 17.4L24 47.4" stroke="#5e5f63" stroke-width="6.2"/><path d="M37.2 18.6L24.8 46" stroke="#b0b1b5" stroke-width="1.5" stroke-linecap="round"/><circle cx="18.2" cy="27.9" r="2.3" fill="none" stroke="#5e5f63" stroke-width="1.2"/><path d="M20.6 27.7H27M24.6 27.9v1.7" stroke="#5e5f63" stroke-width="1.1"/><path d="M16.4 34.2v3.2M20.2 34.2v3.2M21.4 34.2v3.2M23.6 34.2v3.2M36.8 34.6v2.6M38 34.6v2.6M40.2 34.6v2.6M41.4 34.6v2.6" stroke="#5e5f63" stroke-width="1.2"/></g></svg>
<div class="a" style="left:30px;top:16px;width:98.6px;height:20.6px;background:#4a4b4e;border-radius:10.3px;"></div>
<div class="a t" style="top:19px;font-size:13.06px;line-height:15px;color:#ffffff;letter-spacing:-0.209px;left:36.5px;">18 minutes ago</div>
<div class="a" style="left:298px;top:16px;width:32px;height:32px;background:#4a4b4e;border-radius:16px;"></div>
<svg class="a" style="left:304px;top:25px;" width="20" height="14" viewBox="0 0 20 14"><rect x="0.6" y="0.6" width="18.8" height="12.8" rx="0.6" fill="none" stroke="#ffffff" stroke-width="1.2"/><circle cx="6.3" cy="5.2" r="2" fill="#ffffff"/><path d="M2.5 11.6c0-2.4 1.7-3.4 3.8-3.4s3.8 1 3.8 3.4Z" fill="#ffffff"/><path d="M11.4 4H17.2M11.4 6.2H17.2" stroke="#ffffff" stroke-width="1"/></svg>
<div class="a" style="left:30.8px;top:191.6px;width:60px;height:60px;background:#5e5f63;border-radius:30px;"></div>
<svg class="a" style="left:43px;top:205px;" width="35" height="35" viewBox="0 0 35 35"><g transform="translate(0.8 0.2)"><circle cx="17" cy="10.4" r="7.2" fill="none" stroke="#bdbdc0" stroke-width="2.3"/><path d="M2.6 31.4C2.6 24 9 22 17 22S31.4 24 31.4 31.4" fill="none" stroke="#bdbdc0" stroke-width="2.3"/></g></svg>
<div class="a" style="left:355px;top:13px;width:308px;height:244.33px;border-radius:4px;background:#444444;box-shadow:0 2px 5px rgba(0,0,0,.28);overflow:hidden">
<div class="a" style="left:0;top:0;width:308px;height:173px;background:#5e5f63"></div>
</div>
<svg class="a" style="left:485px;top:85px;" width="47" height="48.4" viewBox="0 0 47 48.4"><g transform="translate(0.4 0.3)"><g fill="#b0b1b5"><path d="M5.6 1.6L28 7.3L24.2 15.9L3.1 9Z" stroke="#b0b1b5" stroke-width="2.2" stroke-linejoin="round"/><path d="M29.6 8.6l4.6 1.6l-2.9 7.1l-4.9-1.2Z"/><path d="M7.2 12.2l5.6 1.7l-1.6 5.6a1.6 1.6 0 0 1-1.5 1.1H3.2V17.6H6.4Z"/><path d="M0.4 15.2l2.6 1.2v6.6l-2.6 1.4Z"/><rect x="12.7" y="22.1" width="31.9" height="19.2" rx="3"/></g><path d="M27.2 7.7L22.6 15.2" stroke="#5e5f63" stroke-width="0.7"/><circle cx="6.5" cy="3.8" r="0.9" fill="#5e5f63"/><path d="M29.8 11.4l-1.7 4.2M32.2 12.2l-1.7 4.2" stroke="#5e5f63" stroke-width="0.8"/><path d="M38.6 17.4L24 47.4" stroke="#5e5f63" stroke-width="6.2"/><path d="M37.2 18.6L24.8 46" stroke="#b0b1b5" stroke-width="1.5" stroke-linecap="round"/><circle cx="18.2" cy="27.9" r="2.3" fill="none" stroke="#5e5f63" stroke-width="1.2"/><path d="M20.6 27.7H27M24.6 27.9v1.7" stroke="#5e5f63" stroke-width="1.1"/><path d="M16.4 34.2v3.2M20.2 34.2v3.2M21.4 34.2v3.2M23.6 34.2v3.2M36.8 34.6v2.6M38 34.6v2.6M40.2 34.6v2.6M41.4 34.6v2.6" stroke="#5e5f63" stroke-width="1.2"/></g></svg>
<div class="a" style="left:358px;top:16px;width:98.6px;height:20.6px;background:#4a4b4e;border-radius:10.3px;"></div>
<div class="a t" style="top:19px;font-size:13.06px;line-height:15px;color:#ffffff;letter-spacing:-0.209px;left:364.5px;">37 minutes ago</div>
<div class="a" style="left:626px;top:16px;width:32px;height:32px;background:#4a4b4e;border-radius:16px;"></div>
<svg class="a" style="left:632px;top:25px;" width="20" height="14" viewBox="0 0 20 14"><rect x="0.6" y="0.6" width="18.8" height="12.8" rx="0.6" fill="none" stroke="#ffffff" stroke-width="1.2"/><circle cx="6.3" cy="5.2" r="2" fill="#ffffff"/><path d="M2.5 11.6c0-2.4 1.7-3.4 3.8-3.4s3.8 1 3.8 3.4Z" fill="#ffffff"/><path d="M11.4 4H17.2M11.4 6.2H17.2" stroke="#ffffff" stroke-width="1"/></svg>
<div class="a" style="left:358.8px;top:191.6px;width:60px;height:60px;background:#5e5f63;border-radius:30px;"></div>
<svg class="a" style="left:371px;top:205px;" width="35" height="35" viewBox="0 0 35 35"><g transform="translate(0.8 0.2)"><circle cx="17" cy="10.4" r="7.2" fill="none" stroke="#bdbdc0" stroke-width="2.3"/><path d="M2.6 31.4C2.6 24 9 22 17 22S31.4 24 31.4 31.4" fill="none" stroke="#bdbdc0" stroke-width="2.3"/></g></svg>
<div class="a" style="left:683px;top:13px;width:308px;height:244.33px;border-radius:4px;background:#444444;box-shadow:0 2px 5px rgba(0,0,0,.28);overflow:hidden">
<div class="a" style="left:0;top:0;width:308px;height:173px;background:#5e5f63"></div>
</div>
<svg class="a" style="left:813px;top:85px;" width="47" height="48.4" viewBox="0 0 47 48.4"><g transform="translate(0.4 0.3)"><g fill="#b0b1b5"><path d="M5.6 1.6L28 7.3L24.2 15.9L3.1 9Z" stroke="#b0b1b5" stroke-width="2.2" stroke-linejoin="round"/><path d="M29.6 8.6l4.6 1.6l-2.9 7.1l-4.9-1.2Z"/><path d="M7.2 12.2l5.6 1.7l-1.6 5.6a1.6 1.6 0 0 1-1.5 1.1H3.2V17.6H6.4Z"/><path d="M0.4 15.2l2.6 1.2v6.6l-2.6 1.4Z"/><rect x="12.7" y="22.1" width="31.9" height="19.2" rx="3"/></g><path d="M27.2 7.7L22.6 15.2" stroke="#5e5f63" stroke-width="0.7"/><circle cx="6.5" cy="3.8" r="0.9" fill="#5e5f63"/><path d="M29.8 11.4l-1.7 4.2M32.2 12.2l-1.7 4.2" stroke="#5e5f63" stroke-width="0.8"/><path d="M38.6 17.4L24 47.4" stroke="#5e5f63" stroke-width="6.2"/><path d="M37.2 18.6L24.8 46" stroke="#b0b1b5" stroke-width="1.5" stroke-linecap="round"/><circle cx="18.2" cy="27.9" r="2.3" fill="none" stroke="#5e5f63" stroke-width="1.2"/><path d="M20.6 27.7H27M24.6 27.9v1.7" stroke="#5e5f63" stroke-width="1.1"/><path d="M16.4 34.2v3.2M20.2 34.2v3.2M21.4 34.2v3.2M23.6 34.2v3.2M36.8 34.6v2.6M38 34.6v2.6M40.2 34.6v2.6M41.4 34.6v2.6" stroke="#5e5f63" stroke-width="1.2"/></g></svg>
<div class="a" style="left:686px;top:16px;width:98.6px;height:20.6px;background:#4a4b4e;border-radius:10.3px;"></div>
<div class="a t" style="top:19px;font-size:13.06px;line-height:15px;color:#ffffff;letter-spacing:-0.209px;left:692.5px;">42 minutes ago</div>
<div class="a" style="left:954px;top:16px;width:32px;height:32px;background:#4a4b4e;border-radius:16px;"></div>
<svg class="a" style="left:960px;top:25px;" width="20" height="14" viewBox="0 0 20 14"><rect x="0.6" y="0.6" width="18.8" height="12.8" rx="0.6" fill="none" stroke="#ffffff" stroke-width="1.2"/><circle cx="6.3" cy="5.2" r="2" fill="#ffffff"/><path d="M2.5 11.6c0-2.4 1.7-3.4 3.8-3.4s3.8 1 3.8 3.4Z" fill="#ffffff"/><path d="M11.4 4H17.2M11.4 6.2H17.2" stroke="#ffffff" stroke-width="1"/></svg>
<div class="a" style="left:686.8px;top:191.6px;width:60px;height:60px;background:#5e5f63;border-radius:30px;"></div>
<svg class="a" style="left:699px;top:205px;" width="35" height="35" viewBox="0 0 35 35"><g transform="translate(0.8 0.2)"><circle cx="17" cy="10.4" r="7.2" fill="none" stroke="#bdbdc0" stroke-width="2.3"/><path d="M2.6 31.4C2.6 24 9 22 17 22S31.4 24 31.4 31.4" fill="none" stroke="#bdbdc0" stroke-width="2.3"/></g></svg>
<div class="a" style="left:1010px;top:13px;width:308px;height:244.33px;border-radius:4px;background:#444444;box-shadow:0 2px 5px rgba(0,0,0,.28);overflow:hidden">
<div class="a" style="left:0;top:0;width:308px;height:173px;background:#5e5f63"></div>
</div>
<svg class="a" style="left:1140px;top:85px;" width="47" height="48.4" viewBox="0 0 47 48.4"><g transform="translate(0.4 0.3)"><g fill="#b0b1b5"><path d="M5.6 1.6L28 7.3L24.2 15.9L3.1 9Z" stroke="#b0b1b5" stroke-width="2.2" stroke-linejoin="round"/><path d="M29.6 8.6l4.6 1.6l-2.9 7.1l-4.9-1.2Z"/><path d="M7.2 12.2l5.6 1.7l-1.6 5.6a1.6 1.6 0 0 1-1.5 1.1H3.2V17.6H6.4Z"/><path d="M0.4 15.2l2.6 1.2v6.6l-2.6 1.4Z"/><rect x="12.7" y="22.1" width="31.9" height="19.2" rx="3"/></g><path d="M27.2 7.7L22.6 15.2" stroke="#5e5f63" stroke-width="0.7"/><circle cx="6.5" cy="3.8" r="0.9" fill="#5e5f63"/><path d="M29.8 11.4l-1.7 4.2M32.2 12.2l-1.7 4.2" stroke="#5e5f63" stroke-width="0.8"/><path d="M38.6 17.4L24 47.4" stroke="#5e5f63" stroke-width="6.2"/><path d="M37.2 18.6L24.8 46" stroke="#b0b1b5" stroke-width="1.5" stroke-linecap="round"/><circle cx="18.2" cy="27.9" r="2.3" fill="none" stroke="#5e5f63" stroke-width="1.2"/><path d="M20.6 27.7H27M24.6 27.9v1.7" stroke="#5e5f63" stroke-width="1.1"/><path d="M16.4 34.2v3.2M20.2 34.2v3.2M21.4 34.2v3.2M23.6 34.2v3.2M36.8 34.6v2.6M38 34.6v2.6M40.2 34.6v2.6M41.4 34.6v2.6" stroke="#5e5f63" stroke-width="1.2"/></g></svg>
<div class="a" style="left:1013px;top:16px;width:98.6px;height:20.6px;background:#4a4b4e;border-radius:10.3px;"></div>
<div class="a t" style="top:19px;font-size:13.06px;line-height:15px;color:#ffffff;letter-spacing:-0.209px;left:1019.5px;">44 minutes ago</div>
<div class="a" style="left:1281px;top:16px;width:32px;height:32px;background:#4a4b4e;border-radius:16px;"></div>
<svg class="a" style="left:1287px;top:25px;" width="20" height="14" viewBox="0 0 20 14"><rect x="0.6" y="0.6" width="18.8" height="12.8" rx="0.6" fill="none" stroke="#ffffff" stroke-width="1.2"/><circle cx="6.3" cy="5.2" r="2" fill="#ffffff"/><path d="M2.5 11.6c0-2.4 1.7-3.4 3.8-3.4s3.8 1 3.8 3.4Z" fill="#ffffff"/><path d="M11.4 4H17.2M11.4 6.2H17.2" stroke="#ffffff" stroke-width="1"/></svg>
<div class="a" style="left:1013.8px;top:191.6px;width:60px;height:60px;background:#5e5f63;border-radius:30px;"></div>
<svg class="a" style="left:1026px;top:205px;" width="35" height="35" viewBox="0 0 35 35"><g transform="translate(0.8 0.2)"><circle cx="17" cy="10.4" r="7.2" fill="none" stroke="#bdbdc0" stroke-width="2.3"/><path d="M2.6 31.4C2.6 24 9 22 17 22S31.4 24 31.4 31.4" fill="none" stroke="#bdbdc0" stroke-width="2.3"/></g></svg>
<div class="a t" style="top:196px;font-size:14.78px;line-height:16px;color:#dedede;letter-spacing:-0.031px;left:1081.3px;">Taylor Dalton</div>
<div class="a t" style="top:216px;font-size:14.78px;line-height:16px;color:#dedede;letter-spacing:-0.365px;left:1081.3px;">Access Granted</div>
<div class="a t" style="top:235px;font-size:14.78px;line-height:16px;color:#dedede;letter-spacing:-0.132px;left:1081.3px;">Station 42 Controller 2 - Bay To A...</div>
<div class="a" style="left:1010px;top:277.33px;width:308px;height:244.33px;border-radius:4px;background:#444444;box-shadow:0 2px 5px rgba(0,0,0,.28);overflow:hidden">
<div class="a" style="left:0;top:0;width:308px;height:173px;background:#5e5f63"></div>
</div>
<svg class="a" style="left:1140px;top:349px;" width="47" height="48.4" viewBox="0 0 47 48.4"><g transform="translate(0.4 0.63)"><g fill="#b0b1b5"><path d="M5.6 1.6L28 7.3L24.2 15.9L3.1 9Z" stroke="#b0b1b5" stroke-width="2.2" stroke-linejoin="round"/><path d="M29.6 8.6l4.6 1.6l-2.9 7.1l-4.9-1.2Z"/><path d="M7.2 12.2l5.6 1.7l-1.6 5.6a1.6 1.6 0 0 1-1.5 1.1H3.2V17.6H6.4Z"/><path d="M0.4 15.2l2.6 1.2v6.6l-2.6 1.4Z"/><rect x="12.7" y="22.1" width="31.9" height="19.2" rx="3"/></g><path d="M27.2 7.7L22.6 15.2" stroke="#5e5f63" stroke-width="0.7"/><circle cx="6.5" cy="3.8" r="0.9" fill="#5e5f63"/><path d="M29.8 11.4l-1.7 4.2M32.2 12.2l-1.7 4.2" stroke="#5e5f63" stroke-width="0.8"/><path d="M38.6 17.4L24 47.4" stroke="#5e5f63" stroke-width="6.2"/><path d="M37.2 18.6L24.8 46" stroke="#b0b1b5" stroke-width="1.5" stroke-linecap="round"/><circle cx="18.2" cy="27.9" r="2.3" fill="none" stroke="#5e5f63" stroke-width="1.2"/><path d="M20.6 27.7H27M24.6 27.9v1.7" stroke="#5e5f63" stroke-width="1.1"/><path d="M16.4 34.2v3.2M20.2 34.2v3.2M21.4 34.2v3.2M23.6 34.2v3.2M36.8 34.6v2.6M38 34.6v2.6M40.2 34.6v2.6M41.4 34.6v2.6" stroke="#5e5f63" stroke-width="1.2"/></g></svg>
<div class="a" style="left:1013px;top:280.33px;width:95.6px;height:20.6px;background:#4a4b4e;border-radius:10.3px;"></div>
<div class="a t" style="top:283px;font-size:13.06px;line-height:15px;color:#ffffff;letter-spacing:-0.329px;left:1019.5px;">03-08 10:54:07</div>
<div class="a" style="left:1281px;top:280.33px;width:32px;height:32px;background:#4a4b4e;border-radius:16px;"></div>
<svg class="a" style="left:1287px;top:289px;" width="21" height="15" viewBox="0 0 21 15"><g transform="translate(0 0.33)"><rect x="0.6" y="0.6" width="18.8" height="12.8" rx="0.6" fill="none" stroke="#ffffff" stroke-width="1.2"/><circle cx="6.3" cy="5.2" r="2" fill="#ffffff"/><path d="M2.5 11.6c0-2.4 1.7-3.4 3.8-3.4s3.8 1 3.8 3.4Z" fill="#ffffff"/><path d="M11.4 4H17.2M11.4 6.2H17.2" stroke="#ffffff" stroke-width="1"/></g></svg>
<div class="a" style="left:1013.8px;top:455.93px;width:60px;height:60px;background:#5e5f63;border-radius:30px;"></div>
<svg class="a" style="left:1026px;top:469px;" width="35" height="35" viewBox="0 0 35 35"><g transform="translate(0.8 0.53)"><circle cx="17" cy="10.4" r="7.2" fill="none" stroke="#bdbdc0" stroke-width="2.3"/><path d="M2.6 31.4C2.6 24 9 22 17 22S31.4 24 31.4 31.4" fill="none" stroke="#bdbdc0" stroke-width="2.3"/></g></svg>
<div class="a t" style="top:461px;font-size:14.78px;line-height:16px;color:#dedede;letter-spacing:-0.218px;left:1081.3px;">Jernigan Stephen</div>
<div class="a t" style="top:480px;font-size:14.78px;line-height:16px;color:#dedede;letter-spacing:-0.365px;left:1081.3px;">Access Granted</div>
<div class="a t" style="top:500px;font-size:14.78px;line-height:16px;color:#dedede;letter-spacing:-0.135px;left:1081.3px;">Station 43 Controller 3 - Bay Fron...</div>
<div class="a" style="left:1010px;top:541.67px;width:308px;height:244.33px;border-radius:4px;background:#444444;box-shadow:0 2px 5px rgba(0,0,0,.28);overflow:hidden">
<div class="a" style="left:0;top:0;width:308px;height:173px;background:#5e5f63"></div>
</div>
<svg class="a" style="left:1140px;top:613px;" width="47" height="48.4" viewBox="0 0 47 48.4"><g transform="translate(0.4 0.97)"><g fill="#b0b1b5"><path d="M5.6 1.6L28 7.3L24.2 15.9L3.1 9Z" stroke="#b0b1b5" stroke-width="2.2" stroke-linejoin="round"/><path d="M29.6 8.6l4.6 1.6l-2.9 7.1l-4.9-1.2Z"/><path d="M7.2 12.2l5.6 1.7l-1.6 5.6a1.6 1.6 0 0 1-1.5 1.1H3.2V17.6H6.4Z"/><path d="M0.4 15.2l2.6 1.2v6.6l-2.6 1.4Z"/><rect x="12.7" y="22.1" width="31.9" height="19.2" rx="3"/></g><path d="M27.2 7.7L22.6 15.2" stroke="#5e5f63" stroke-width="0.7"/><circle cx="6.5" cy="3.8" r="0.9" fill="#5e5f63"/><path d="M29.8 11.4l-1.7 4.2M32.2 12.2l-1.7 4.2" stroke="#5e5f63" stroke-width="0.8"/><path d="M38.6 17.4L24 47.4" stroke="#5e5f63" stroke-width="6.2"/><path d="M37.2 18.6L24.8 46" stroke="#b0b1b5" stroke-width="1.5" stroke-linecap="round"/><circle cx="18.2" cy="27.9" r="2.3" fill="none" stroke="#5e5f63" stroke-width="1.2"/><path d="M20.6 27.7H27M24.6 27.9v1.7" stroke="#5e5f63" stroke-width="1.1"/><path d="M16.4 34.2v3.2M20.2 34.2v3.2M21.4 34.2v3.2M23.6 34.2v3.2M36.8 34.6v2.6M38 34.6v2.6M40.2 34.6v2.6M41.4 34.6v2.6" stroke="#5e5f63" stroke-width="1.2"/></g></svg>
<div class="a" style="left:1013px;top:544.67px;width:95.6px;height:20.6px;background:#4a4b4e;border-radius:10.3px;"></div>
<div class="a t" style="top:548px;font-size:13.06px;line-height:15px;color:#ffffff;letter-spacing:-0.329px;left:1019.5px;">03-08 10:32:53</div>
<div class="a" style="left:1281px;top:544.67px;width:32px;height:32px;background:#4a4b4e;border-radius:16px;"></div>
<svg class="a" style="left:1287px;top:553px;" width="21" height="15" viewBox="0 0 21 15"><g transform="translate(0 0.67)"><rect x="0.6" y="0.6" width="18.8" height="12.8" rx="0.6" fill="none" stroke="#ffffff" stroke-width="1.2"/><circle cx="6.3" cy="5.2" r="2" fill="#ffffff"/><path d="M2.5 11.6c0-2.4 1.7-3.4 3.8-3.4s3.8 1 3.8 3.4Z" fill="#ffffff"/><path d="M11.4 4H17.2M11.4 6.2H17.2" stroke="#ffffff" stroke-width="1"/></g></svg>
<div class="a" style="left:1013.8px;top:720.27px;width:60px;height:60px;background:#5e5f63;border-radius:30px;"></div>
<svg class="a" style="left:1026px;top:733px;" width="35" height="35" viewBox="0 0 35 35"><g transform="translate(0.8 0.87)"><circle cx="17" cy="10.4" r="7.2" fill="none" stroke="#bdbdc0" stroke-width="2.3"/><path d="M2.6 31.4C2.6 24 9 22 17 22S31.4 24 31.4 31.4" fill="none" stroke="#bdbdc0" stroke-width="2.3"/></g></svg>
<div class="a t" style="top:725px;font-size:14.78px;line-height:16px;color:#dedede;letter-spacing:-0.297px;left:1081.3px;">Sumner Chris</div>
<div class="a t" style="top:744px;font-size:14.78px;line-height:16px;color:#dedede;letter-spacing:-0.365px;left:1081.3px;">Access Granted</div>
<div class="a t" style="top:764px;font-size:14.78px;line-height:16px;color:#dedede;letter-spacing:-0.048px;left:1081.3px;">Station 43 Controller 3 - Office H...</div>
<div class="a" style="left:27px;top:806px;width:308px;height:244.33px;border-radius:4px;background:#444444;box-shadow:0 2px 5px rgba(0,0,0,.28);overflow:hidden">
<div class="a" style="left:0;top:0;width:308px;height:173px;background:#5e5f63"></div>
</div>
<svg class="a" style="left:157px;top:878px;" width="47" height="48.4" viewBox="0 0 47 48.4"><g transform="translate(0.4 0.3)"><g fill="#b0b1b5"><path d="M5.6 1.6L28 7.3L24.2 15.9L3.1 9Z" stroke="#b0b1b5" stroke-width="2.2" stroke-linejoin="round"/><path d="M29.6 8.6l4.6 1.6l-2.9 7.1l-4.9-1.2Z"/><path d="M7.2 12.2l5.6 1.7l-1.6 5.6a1.6 1.6 0 0 1-1.5 1.1H3.2V17.6H6.4Z"/><path d="M0.4 15.2l2.6 1.2v6.6l-2.6 1.4Z"/><rect x="12.7" y="22.1" width="31.9" height="19.2" rx="3"/></g><path d="M27.2 7.7L22.6 15.2" stroke="#5e5f63" stroke-width="0.7"/><circle cx="6.5" cy="3.8" r="0.9" fill="#5e5f63"/><path d="M29.8 11.4l-1.7 4.2M32.2 12.2l-1.7 4.2" stroke="#5e5f63" stroke-width="0.8"/><path d="M38.6 17.4L24 47.4" stroke="#5e5f63" stroke-width="6.2"/><path d="M37.2 18.6L24.8 46" stroke="#b0b1b5" stroke-width="1.5" stroke-linecap="round"/><circle cx="18.2" cy="27.9" r="2.3" fill="none" stroke="#5e5f63" stroke-width="1.2"/><path d="M20.6 27.7H27M24.6 27.9v1.7" stroke="#5e5f63" stroke-width="1.1"/><path d="M16.4 34.2v3.2M20.2 34.2v3.2M21.4 34.2v3.2M23.6 34.2v3.2M36.8 34.6v2.6M38 34.6v2.6M40.2 34.6v2.6M41.4 34.6v2.6" stroke="#5e5f63" stroke-width="1.2"/></g></svg>
<div class="a" style="left:30px;top:809px;width:95.6px;height:20.6px;background:#4a4b4e;border-radius:10.3px;"></div>
<div class="a" style="left:298px;top:809px;width:32px;height:32px;background:#4a4b4e;border-radius:16px;"></div>
<svg class="a" style="left:304px;top:818px;" width="20" height="14" viewBox="0 0 20 14"><rect x="0.6" y="0.6" width="18.8" height="12.8" rx="0.6" fill="none" stroke="#ffffff" stroke-width="1.2"/><circle cx="6.3" cy="5.2" r="2" fill="#ffffff"/><path d="M2.5 11.6c0-2.4 1.7-3.4 3.8-3.4s3.8 1 3.8 3.4Z" fill="#ffffff"/><path d="M11.4 4H17.2M11.4 6.2H17.2" stroke="#ffffff" stroke-width="1"/></svg>
<div class="a" style="left:30.8px;top:984.6px;width:60px;height:60px;background:#5e5f63;border-radius:30px;"></div>
<svg class="a" style="left:43px;top:998px;" width="35" height="35" viewBox="0 0 35 35"><g transform="translate(0.8 0.2)"><circle cx="17" cy="10.4" r="7.2" fill="none" stroke="#bdbdc0" stroke-width="2.3"/><path d="M2.6 31.4C2.6 24 9 22 17 22S31.4 24 31.4 31.4" fill="none" stroke="#bdbdc0" stroke-width="2.3"/></g></svg>
<div class="a t" style="top:989px;font-size:14.78px;line-height:16px;color:#dedede;letter-spacing:-0.101px;left:98.3px;">Schneider Matt</div>
<div class="a" style="left:355px;top:806px;width:308px;height:244.33px;border-radius:4px;background:#444444;box-shadow:0 2px 5px rgba(0,0,0,.28);overflow:hidden">
<div class="a" style="left:0;top:0;width:308px;height:173px;background:#5e5f63"></div>
</div>
<svg class="a" style="left:485px;top:878px;" width="47" height="48.4" viewBox="0 0 47 48.4"><g transform="translate(0.4 0.3)"><g fill="#b0b1b5"><path d="M5.6 1.6L28 7.3L24.2 15.9L3.1 9Z" stroke="#b0b1b5" stroke-width="2.2" stroke-linejoin="round"/><path d="M29.6 8.6l4.6 1.6l-2.9 7.1l-4.9-1.2Z"/><path d="M7.2 12.2l5.6 1.7l-1.6 5.6a1.6 1.6 0 0 1-1.5 1.1H3.2V17.6H6.4Z"/><path d="M0.4 15.2l2.6 1.2v6.6l-2.6 1.4Z"/><rect x="12.7" y="22.1" width="31.9" height="19.2" rx="3"/></g><path d="M27.2 7.7L22.6 15.2" stroke="#5e5f63" stroke-width="0.7"/><circle cx="6.5" cy="3.8" r="0.9" fill="#5e5f63"/><path d="M29.8 11.4l-1.7 4.2M32.2 12.2l-1.7 4.2" stroke="#5e5f63" stroke-width="0.8"/><path d="M38.6 17.4L24 47.4" stroke="#5e5f63" stroke-width="6.2"/><path d="M37.2 18.6L24.8 46" stroke="#b0b1b5" stroke-width="1.5" stroke-linecap="round"/><circle cx="18.2" cy="27.9" r="2.3" fill="none" stroke="#5e5f63" stroke-width="1.2"/><path d="M20.6 27.7H27M24.6 27.9v1.7" stroke="#5e5f63" stroke-width="1.1"/><path d="M16.4 34.2v3.2M20.2 34.2v3.2M21.4 34.2v3.2M23.6 34.2v3.2M36.8 34.6v2.6M38 34.6v2.6M40.2 34.6v2.6M41.4 34.6v2.6" stroke="#5e5f63" stroke-width="1.2"/></g></svg>
<div class="a" style="left:358px;top:809px;width:95.6px;height:20.6px;background:#4a4b4e;border-radius:10.3px;"></div>
<div class="a" style="left:626px;top:809px;width:32px;height:32px;background:#4a4b4e;border-radius:16px;"></div>
<svg class="a" style="left:632px;top:818px;" width="20" height="14" viewBox="0 0 20 14"><rect x="0.6" y="0.6" width="18.8" height="12.8" rx="0.6" fill="none" stroke="#ffffff" stroke-width="1.2"/><circle cx="6.3" cy="5.2" r="2" fill="#ffffff"/><path d="M2.5 11.6c0-2.4 1.7-3.4 3.8-3.4s3.8 1 3.8 3.4Z" fill="#ffffff"/><path d="M11.4 4H17.2M11.4 6.2H17.2" stroke="#ffffff" stroke-width="1"/></svg>
<div class="a" style="left:358.8px;top:984.6px;width:60px;height:60px;background:#5e5f63;border-radius:30px;"></div>
<svg class="a" style="left:371px;top:998px;" width="35" height="35" viewBox="0 0 35 35"><g transform="translate(0.8 0.2)"><circle cx="17" cy="10.4" r="7.2" fill="none" stroke="#bdbdc0" stroke-width="2.3"/><path d="M2.6 31.4C2.6 24 9 22 17 22S31.4 24 31.4 31.4" fill="none" stroke="#bdbdc0" stroke-width="2.3"/></g></svg>
<div class="a t" style="top:989px;font-size:14.78px;line-height:16px;color:#dedede;letter-spacing:-0.572px;left:426.3px;">Chacin Vanessa</div>
<div class="a" style="left:683px;top:806px;width:308px;height:244.33px;border-radius:4px;background:#444444;box-shadow:0 2px 5px rgba(0,0,0,.28);overflow:hidden">
<div class="a" style="left:0;top:0;width:308px;height:173px;background:#5e5f63"></div>
</div>
<svg class="a" style="left:813px;top:878px;" width="47" height="48.4" viewBox="0 0 47 48.4"><g transform="translate(0.4 0.3)"><g fill="#b0b1b5"><path d="M5.6 1.6L28 7.3L24.2 15.9L3.1 9Z" stroke="#b0b1b5" stroke-width="2.2" stroke-linejoin="round"/><path d="M29.6 8.6l4.6 1.6l-2.9 7.1l-4.9-1.2Z"/><path d="M7.2 12.2l5.6 1.7l-1.6 5.6a1.6 1.6 0 0 1-1.5 1.1H3.2V17.6H6.4Z"/><path d="M0.4 15.2l2.6 1.2v6.6l-2.6 1.4Z"/><rect x="12.7" y="22.1" width="31.9" height="19.2" rx="3"/></g><path d="M27.2 7.7L22.6 15.2" stroke="#5e5f63" stroke-width="0.7"/><circle cx="6.5" cy="3.8" r="0.9" fill="#5e5f63"/><path d="M29.8 11.4l-1.7 4.2M32.2 12.2l-1.7 4.2" stroke="#5e5f63" stroke-width="0.8"/><path d="M38.6 17.4L24 47.4" stroke="#5e5f63" stroke-width="6.2"/><path d="M37.2 18.6L24.8 46" stroke="#b0b1b5" stroke-width="1.5" stroke-linecap="round"/><circle cx="18.2" cy="27.9" r="2.3" fill="none" stroke="#5e5f63" stroke-width="1.2"/><path d="M20.6 27.7H27M24.6 27.9v1.7" stroke="#5e5f63" stroke-width="1.1"/><path d="M16.4 34.2v3.2M20.2 34.2v3.2M21.4 34.2v3.2M23.6 34.2v3.2M36.8 34.6v2.6M38 34.6v2.6M40.2 34.6v2.6M41.4 34.6v2.6" stroke="#5e5f63" stroke-width="1.2"/></g></svg>
<div class="a" style="left:686px;top:809px;width:95.6px;height:20.6px;background:#4a4b4e;border-radius:10.3px;"></div>
<div class="a" style="left:954px;top:809px;width:32px;height:32px;background:#4a4b4e;border-radius:16px;"></div>
<svg class="a" style="left:960px;top:818px;" width="20" height="14" viewBox="0 0 20 14"><rect x="0.6" y="0.6" width="18.8" height="12.8" rx="0.6" fill="none" stroke="#ffffff" stroke-width="1.2"/><circle cx="6.3" cy="5.2" r="2" fill="#ffffff"/><path d="M2.5 11.6c0-2.4 1.7-3.4 3.8-3.4s3.8 1 3.8 3.4Z" fill="#ffffff"/><path d="M11.4 4H17.2M11.4 6.2H17.2" stroke="#ffffff" stroke-width="1"/></svg>
<div class="a" style="left:686.8px;top:984.6px;width:60px;height:60px;background:#5e5f63;border-radius:30px;"></div>
<svg class="a" style="left:699px;top:998px;" width="35" height="35" viewBox="0 0 35 35"><g transform="translate(0.8 0.2)"><circle cx="17" cy="10.4" r="7.2" fill="none" stroke="#bdbdc0" stroke-width="2.3"/><path d="M2.6 31.4C2.6 24 9 22 17 22S31.4 24 31.4 31.4" fill="none" stroke="#bdbdc0" stroke-width="2.3"/></g></svg>
<div class="a t" style="top:989px;font-size:14.78px;line-height:16px;color:#dedede;letter-spacing:-0.218px;left:754.3px;">Jernigan Stephen</div>
<div class="a" style="left:1010px;top:806px;width:308px;height:244.33px;border-radius:4px;background:#444444;box-shadow:0 2px 5px rgba(0,0,0,.28);overflow:hidden">
<div class="a" style="left:0;top:0;width:308px;height:173px;background:#5e5f63"></div>
</div>
<svg class="a" style="left:1140px;top:878px;" width="47" height="48.4" viewBox="0 0 47 48.4"><g transform="translate(0.4 0.3)"><g fill="#b0b1b5"><path d="M5.6 1.6L28 7.3L24.2 15.9L3.1 9Z" stroke="#b0b1b5" stroke-width="2.2" stroke-linejoin="round"/><path d="M29.6 8.6l4.6 1.6l-2.9 7.1l-4.9-1.2Z"/><path d="M7.2 12.2l5.6 1.7l-1.6 5.6a1.6 1.6 0 0 1-1.5 1.1H3.2V17.6H6.4Z"/><path d="M0.4 15.2l2.6 1.2v6.6l-2.6 1.4Z"/><rect x="12.7" y="22.1" width="31.9" height="19.2" rx="3"/></g><path d="M27.2 7.7L22.6 15.2" stroke="#5e5f63" stroke-width="0.7"/><circle cx="6.5" cy="3.8" r="0.9" fill="#5e5f63"/><path d="M29.8 11.4l-1.7 4.2M32.2 12.2l-1.7 4.2" stroke="#5e5f63" stroke-width="0.8"/><path d="M38.6 17.4L24 47.4" stroke="#5e5f63" stroke-width="6.2"/><path d="M37.2 18.6L24.8 46" stroke="#b0b1b5" stroke-width="1.5" stroke-linecap="round"/><circle cx="18.2" cy="27.9" r="2.3" fill="none" stroke="#5e5f63" stroke-width="1.2"/><path d="M20.6 27.7H27M24.6 27.9v1.7" stroke="#5e5f63" stroke-width="1.1"/><path d="M16.4 34.2v3.2M20.2 34.2v3.2M21.4 34.2v3.2M23.6 34.2v3.2M36.8 34.6v2.6M38 34.6v2.6M40.2 34.6v2.6M41.4 34.6v2.6" stroke="#5e5f63" stroke-width="1.2"/></g></svg>
<div class="a" style="left:1013px;top:809px;width:95.6px;height:20.6px;background:#4a4b4e;border-radius:10.3px;"></div>
<div class="a t" style="top:812px;font-size:13.06px;line-height:15px;color:#ffffff;letter-spacing:-0.329px;left:1019.5px;">03-08 10:13:34</div>
<div class="a" style="left:1281px;top:809px;width:32px;height:32px;background:#4a4b4e;border-radius:16px;"></div>
<svg class="a" style="left:1287px;top:818px;" width="20" height="14" viewBox="0 0 20 14"><rect x="0.6" y="0.6" width="18.8" height="12.8" rx="0.6" fill="none" stroke="#ffffff" stroke-width="1.2"/><circle cx="6.3" cy="5.2" r="2" fill="#ffffff"/><path d="M2.5 11.6c0-2.4 1.7-3.4 3.8-3.4s3.8 1 3.8 3.4Z" fill="#ffffff"/><path d="M11.4 4H17.2M11.4 6.2H17.2" stroke="#ffffff" stroke-width="1"/></svg>
<div class="a" style="left:1013.8px;top:984.6px;width:60px;height:60px;background:#5e5f63;border-radius:30px;"></div>
<svg class="a" style="left:1026px;top:998px;" width="35" height="35" viewBox="0 0 35 35"><g transform="translate(0.8 0.2)"><circle cx="17" cy="10.4" r="7.2" fill="none" stroke="#bdbdc0" stroke-width="2.3"/><path d="M2.6 31.4C2.6 24 9 22 17 22S31.4 24 31.4 31.4" fill="none" stroke="#bdbdc0" stroke-width="2.3"/></g></svg>
<div class="a t" style="top:989px;font-size:14.78px;line-height:16px;color:#dedede;letter-spacing:0.078px;left:1081.3px;">Myatt Collin</div>
</div>
<div class="a" style="left:361px;top:162px;width:1198px;height:753px;background:#121212;border-radius:8.5px;box-shadow:0 0 0 1px rgba(74,75,80,.5),0 2px 16px 1px rgba(0,0,0,.1);"></div>
<div class="a t" style="top:180px;font-size:24.29px;line-height:27px;color:#e8e8e8;-webkit-text-stroke:0.68px #e8e8e8;letter-spacing:0.519px;left:373.6px;">Edit Device</div>
<div class="a t" style="top:191px;font-size:16px;line-height:17px;color:#bcbcbc;letter-spacing:0.144px;font-family:'Liberation Serif',serif;left:1397px;">v1.0.5.0.20250520</div>
<svg class="a" style="left:1524px;top:183px;" width="14" height="14" viewBox="0 0 14 14"><g transform="translate(0.2 0.1)"><path d="M0.8 0.8L12.2 12.2M12.2 0.8L0.8 12.2" stroke="#e2e2e2" stroke-width="1.25" fill="none"/></g></svg>
<div class="a" style="left:389px;top:234px;width:260px;height:449px;background:#222222;border-radius:7px;border:1px solid #3e3f44;"></div>
<div class="a" style="left:390px;top:273px;width:258px;height:1px;background:#3e3f44;"></div>
<div class="a t" style="top:246px;font-size:14.78px;line-height:16px;color:#f0f0f0;-webkit-text-stroke:0.22px #f0f0f0;letter-spacing:-0.028px;left:406.4px;">Device</div>
<div class="a t" style="top:285px;font-size:14.78px;line-height:16px;color:#f0f0f0;-webkit-text-stroke:0.22px #f0f0f0;letter-spacing:0.254px;left:406.4px;">Door 1</div>
<div class="a t" style="top:318px;font-size:14.78px;line-height:16px;color:#e2e2e2;letter-spacing:-0.045px;left:427.1px;">101/Training Room Doo...</div>
<div class="a" style="left:604px;top:318px;width:28px;height:16px;background:#4a90e8;border-radius:8px;"></div>
<div class="a" style="left:617.4px;top:319.8px;width:12.4px;height:12.4px;background:#ffffff;border-radius:6.2px;"></div>
<div class="a t" style="top:345px;font-size:14.78px;line-height:16px;color:#e2e2e2;letter-spacing:-0.045px;left:427.1px;">101/Training Room Doo...</div>
<div class="a" style="left:604px;top:345px;width:28px;height:16px;background:#a4a5a9;border-radius:8px;"></div>
<div class="a" style="left:606px;top:346.8px;width:12.4px;height:12.4px;background:#ffffff;border-radius:6.2px;"></div>
<div class="a" style="left:390px;top:375.4px;width:258px;height:1px;background:#3e3f44;"></div>
<div class="a t" style="top:387px;font-size:14.78px;line-height:16px;color:#f0f0f0;-webkit-text-stroke:0.22px #f0f0f0;letter-spacing:0.254px;left:406.4px;">Door 2</div>
<div class="a t" style="top:420px;font-size:14.78px;line-height:16px;color:#e2e2e2;letter-spacing:-0.03px;left:427.1px;">S1-A / Patio - Entry</div>
<div class="a" style="left:604px;top:420px;width:28px;height:16px;background:#4a90e8;border-radius:8px;"></div>
<div class="a" style="left:617.4px;top:421.8px;width:12.4px;height:12.4px;background:#ffffff;border-radius:6.2px;"></div>
<div class="a t" style="top:448px;font-size:14.78px;line-height:16px;color:#e2e2e2;letter-spacing:-0.123px;left:427.1px;">S1-A / Patio - Exit</div>
<div class="a" style="left:604px;top:448px;width:28px;height:16px;background:#a4a5a9;border-radius:8px;"></div>
<div class="a" style="left:606px;top:449.8px;width:12.4px;height:12.4px;background:#ffffff;border-radius:6.2px;"></div>
<div class="a" style="left:390px;top:477px;width:259px;height:104px;background:#3f4d62;"></div>
<div class="a t" style="top:489px;font-size:14.78px;line-height:16px;color:#f0f0f0;-webkit-text-stroke:0.22px #f0f0f0;letter-spacing:0.254px;left:406.4px;">Door 3</div>
<div class="a t" style="top:522px;font-size:14.78px;line-height:16px;color:#e2e2e2;letter-spacing:-0.009px;left:427.1px;">135/Bay Door - Entry</div>
<div class="a" style="left:604px;top:522px;width:28px;height:16px;background:#4a90e8;border-radius:8px;"></div>
<div class="a" style="left:617.4px;top:523.8px;width:12.4px;height:12.4px;background:#ffffff;border-radius:6.2px;"></div>
<div class="a t" style="top:550px;font-size:14.78px;line-height:16px;color:#e2e2e2;letter-spacing:-0.074px;left:427.1px;">135/Bay Door - Exit</div>
<div class="a" style="left:604px;top:550px;width:28px;height:16px;background:#a4a5a9;border-radius:8px;"></div>
<div class="a" style="left:606px;top:551.8px;width:12.4px;height:12.4px;background:#ffffff;border-radius:6.2px;"></div>
<div class="a t" style="top:592px;font-size:14.78px;line-height:16px;color:#f0f0f0;-webkit-text-stroke:0.22px #f0f0f0;letter-spacing:0.254px;left:406.4px;">Door 4</div>
<div class="a t" style="top:624px;font-size:14.78px;line-height:16px;color:#e2e2e2;letter-spacing:-0.178px;left:427.1px;">122 /IT Room Door - En...</div>
<div class="a" style="left:604px;top:624px;width:28px;height:16px;background:#4a90e8;border-radius:8px;"></div>
<div class="a" style="left:617.4px;top:625.8px;width:12.4px;height:12.4px;background:#ffffff;border-radius:6.2px;"></div>
<div class="a t" style="top:652px;font-size:14.78px;line-height:16px;color:#e2e2e2;letter-spacing:-0.11px;left:427.1px;">122 /IT Room Door - Exit</div>
<div class="a" style="left:604px;top:652px;width:28px;height:16px;background:#a4a5a9;border-radius:8px;"></div>
<div class="a" style="left:606px;top:653.8px;width:12.4px;height:12.4px;background:#ffffff;border-radius:6.2px;"></div>
<svg class="a" style="left:669px;top:240px;" width="16" height="16" viewBox="0 0 16 16"><circle cx="8" cy="8" r="8" fill="#e9e9e9"/><text x="8.2" y="12.6" font-family="Liberation Serif,serif" font-size="13" font-weight="700" font-style="italic" fill="#121212" text-anchor="middle">i</text></svg>
<div class="a t" style="top:240px;font-size:14.78px;line-height:16px;color:#e2e2e2;letter-spacing:-0.138px;left:693.2px;">License Expiration04-07-2026 18:30:09</div>
<div class="a t" style="top:240px;font-size:14.78px;line-height:16px;color:#e2e2e2;letter-spacing:-0.425px;left:963px;">Logs Keep Days365</div>
<div class="a t" style="top:240px;font-size:14.78px;line-height:16px;color:#e2e2e2;letter-spacing:-0.308px;left:1106.2px;">Snapshot Keep Days0</div>
<div class="a" style="left:669px;top:267px;width:837px;height:1px;background:#38393d;"></div>
<div class="a t" style="top:292px;font-size:14.78px;line-height:16px;color:#ececec;-webkit-text-stroke:0.41px #ececec;letter-spacing:0.661px;left:669px;">Door</div>
<div class="a t" style="top:293px;font-size:17px;line-height:19px;color:#f04548;font-weight:700;left:707.2px;">*</div>
<div class="a" style="left:808px;top:284px;width:697px;height:32px;background:#323337;border-radius:5px;"></div>
<div class="a t" style="top:292px;font-size:14.78px;line-height:16px;color:#e2e2e2;letter-spacing:0.064px;left:820.4px;">135/Bay Door</div>
<div class="a t" style="top:344px;font-size:14.78px;line-height:16px;color:#ececec;-webkit-text-stroke:0.41px #ececec;letter-spacing:-0.119px;left:669px;">Lock Reset Time</div>
<div class="a t" style="top:345px;font-size:17px;line-height:19px;color:#f04548;font-weight:700;left:782.5px;">*</div>
<div class="a" style="left:875px;top:336px;width:206px;height:32px;background:#323337;border-radius:5px;border:1px solid #2e2f33;"></div>
<div class="a" style="left:1021px;top:337px;width:59px;height:30px;background:#222325;border-radius:0 4px 4px 0"></div>
<div class="a t" style="top:344px;font-size:14.78px;line-height:16px;color:#e2e2e2;left:887px;">5</div>
<div class="a t" style="top:344px;font-size:14.78px;line-height:16px;color:#e2e2e2;letter-spacing:-0.701px;left:1031.7px;">sec(s)</div>
<div class="a t" style="top:344px;font-size:14.78px;line-height:16px;color:#ececec;-webkit-text-stroke:0.41px #ececec;letter-spacing:0.2px;left:1094.5px;">Held Open Time</div>
<div class="a t" style="top:345px;font-size:17px;line-height:19px;color:#f04548;font-weight:700;left:1208.2px;">*</div>
<div class="a" style="left:1300px;top:336px;width:206px;height:32px;background:#323337;border-radius:5px;border:1px solid #2e2f33;"></div>
<div class="a" style="left:1446px;top:337px;width:59px;height:30px;background:#222325;border-radius:0 4px 4px 0"></div>
<div class="a t" style="top:344px;font-size:14.78px;line-height:16px;color:#e2e2e2;left:1312px;">10</div>
<div class="a t" style="top:344px;font-size:14.78px;line-height:16px;color:#e2e2e2;letter-spacing:-0.701px;left:1457.5px;">sec(s)</div>
<div class="a" style="left:669px;top:388px;width:837px;height:438.5px;background:#222222;border-radius:6px;border:1px solid #3f4045;"></div>
<div class="a" style="left:670px;top:389px;width:835px;height:31px;background:#323337;border-radius:5px 5px 0 0"></div>
<div class="a" style="left:670px;top:420px;width:835px;height:1px;background:#3b3c41;"></div>
<svg class="a" style="left:682px;top:401px;" width="11" height="8" viewBox="0 0 11 8"><g transform="translate(0.4 0.4)"><path d="M0.3 0.4H9.3L4.8 6.6Z" fill="#e0e0e0"/></g></svg>
<div class="a t" style="top:397px;font-size:14.78px;line-height:16px;color:#e2e2e2;letter-spacing:0.079px;left:704px;">Authentication Schedule</div>
<svg class="a" style="left:1470px;top:393px;" width="24" height="24" viewBox="0 0 24 24"><rect x="1.5" y="1.4" width="14.1" height="17.2" rx="2.2" fill="none" stroke="#55a3f2" stroke-width="1.3"/><circle cx="12.4" cy="9.5" r="1.4" fill="#5b82cc"/><rect x="7.2" y="12.4" width="13.6" height="9.4" rx="1" fill="#323337" stroke="#55a3f2" stroke-width="1.2"/><rect x="8.8" y="14" width="14.2" height="9.1" rx="0.8" fill="#55a3f2"/><path d="M11 16.5H21M11 18.5H21M11 20.6H21" stroke="#323337" stroke-width="0.9"/></svg>
<svg class="a" style="left:680px;top:422px;" width="120" height="48" viewBox="0 0 120 48"><defs><filter id="ds" x="-30%" y="-30%" width="160%" height="170%"><feDropShadow dx="0" dy="1.2" stdDeviation="0.9" flood-color="#050a18" flood-opacity="0.95"/></filter></defs><circle cx="23.1" cy="24" r="16" fill="#4b525d" filter="url(#ds)"/><rect x="15.3" y="15" width="15.3" height="19" fill="#4a6cb6"/><rect x="16.5" y="16.2" width="12.9" height="16.6" fill="none" stroke="#ffffff" stroke-width="1.1"/><path d="M16.5 19.4H29.4" stroke="#ffffff" stroke-width="1.2"/><circle cx="19.2" cy="22.9" r="1.15" fill="#ffffff"/><circle cx="22.95" cy="22.9" r="1.15" fill="#ffffff"/><circle cx="26.7" cy="22.9" r="1.15" fill="#ffffff"/><circle cx="19.2" cy="26.4" r="1.15" fill="#ffffff"/><circle cx="22.95" cy="26.4" r="1.15" fill="#ffffff"/><circle cx="26.7" cy="26.4" r="1.15" fill="#ffffff"/><circle cx="19.2" cy="29.9" r="1.15" fill="#ffffff"/><circle cx="22.95" cy="29.9" r="1.15" fill="#ffffff"/><circle cx="26.7" cy="29.9" r="1.15" fill="#ffffff"/><circle cx="60.9" cy="24" r="18.1" fill="#6ee6f6" filter="url(#ds)"/><circle cx="60.9" cy="24" r="16.2" fill="#5aa8ee"/><path d="M53.8 15.2L61.9 16.1V33.7L53.8 32.2Z" fill="#ffffff"/><path d="M55 15.6H67.2V32H61.9" fill="none" stroke="#ffffff" stroke-width="1.3"/><circle cx="60.3" cy="24.9" r="1" fill="#5aa8ee"/><circle cx="99" cy="24" r="16" fill="#ffa32b" filter="url(#ds)"/><path d="M90 15.1L96.6 16V32.4L90 31.6Z" fill="#ffffff"/><path d="M91 15.7H102.5V23.4" fill="none" stroke="#ffffff" stroke-width="1.2"/><circle cx="93.6" cy="23.9" r="0.9" fill="#ffa32b"/><rect x="98.1" y="24" width="10" height="7.9" rx="0.6" fill="#ffffff"/><circle cx="100.9" cy="26.6" r="1.1" fill="#ffa32b"/><path d="M99.2 30.2c0-1.4 0.7-2 1.7-2s1.7 0.6 1.7 2Z" fill="#ffa32b"/><path d="M103.6 26.6h3.2M103.6 28.8h3.2" stroke="#ffa32b" stroke-width="0.9"/></svg>
<div class="a t" style="top:432px;font-size:12.67px;line-height:14px;color:#c6c6c6;left:611px;width:400px;text-align:center;">0</div>
<div class="a" style="left:811px;top:449px;width:1px;height:10px;background:#a2a2a2;"></div>
<div class="a t" style="top:432px;font-size:12.67px;line-height:14px;color:#c6c6c6;left:638.2px;width:400px;text-align:center;">1</div>
<div class="a" style="left:838px;top:449px;width:1px;height:10px;background:#a2a2a2;"></div>
<div class="a t" style="top:432px;font-size:12.67px;line-height:14px;color:#c6c6c6;left:665.4px;width:400px;text-align:center;">2</div>
<div class="a" style="left:865px;top:449px;width:1px;height:10px;background:#a2a2a2;"></div>
<div class="a t" style="top:432px;font-size:12.67px;line-height:14px;color:#c6c6c6;left:692.6px;width:400px;text-align:center;">3</div>
<div class="a" style="left:892px;top:449px;width:1px;height:10px;background:#a2a2a2;"></div>
<div class="a t" style="top:432px;font-size:12.67px;line-height:14px;color:#c6c6c6;left:719.8px;width:400px;text-align:center;">4</div>
<div class="a" style="left:919px;top:449px;width:1px;height:10px;background:#a2a2a2;"></div>
<div class="a t" style="top:432px;font-size:12.67px;line-height:14px;color:#c6c6c6;left:747px;width:400px;text-align:center;">5</div>
<div class="a" style="left:947px;top:449px;width:1px;height:10px;background:#a2a2a2;"></div>
<div class="a t" style="top:432px;font-size:12.67px;line-height:14px;color:#c6c6c6;left:774.2px;width:400px;text-align:center;">6</div>
<div class="a" style="left:974px;top:449px;width:1px;height:10px;background:#a2a2a2;"></div>
<div class="a t" style="top:432px;font-size:12.67px;line-height:14px;color:#c6c6c6;left:801.4px;width:400px;text-align:center;">7</div>
<div class="a" style="left:1001px;top:449px;width:1px;height:10px;background:#a2a2a2;"></div>
<div class="a t" style="top:432px;font-size:12.67px;line-height:14px;color:#c6c6c6;left:828.6px;width:400px;text-align:center;">8</div>
<div class="a" style="left:1028px;top:449px;width:1px;height:10px;background:#a2a2a2;"></div>
<div class="a t" style="top:432px;font-size:12.67px;line-height:14px;color:#c6c6c6;left:855.8px;width:400px;text-align:center;">9</div>
<div class="a" style="left:1055px;top:449px;width:1px;height:10px;background:#a2a2a2;"></div>
<div class="a t" style="top:432px;font-size:12.67px;line-height:14px;color:#c6c6c6;left:883px;width:400px;text-align:center;">10</div>
<div class="a" style="left:1082px;top:449px;width:1px;height:10px;background:#a2a2a2;"></div>
<div class="a t" style="top:432px;font-size:12.67px;line-height:14px;color:#c6c6c6;left:910.2px;width:400px;text-align:center;">11</div>
<div class="a" style="left:1109px;top:449px;width:1px;height:10px;background:#a2a2a2;"></div>
<div class="a t" style="top:432px;font-size:12.67px;line-height:14px;color:#c6c6c6;left:937.4px;width:400px;text-align:center;">12</div>
<div class="a" style="left:1137px;top:449px;width:1px;height:10px;background:#a2a2a2;"></div>
<div class="a t" style="top:432px;font-size:12.67px;line-height:14px;color:#c6c6c6;left:964.6px;width:400px;text-align:center;">13</div>
<div class="a" style="left:1164px;top:449px;width:1px;height:10px;background:#a2a2a2;"></div>
<div class="a t" style="top:432px;font-size:12.67px;line-height:14px;color:#c6c6c6;left:991.8px;width:400px;text-align:center;">14</div>
<div class="a" style="left:1191px;top:449px;width:1px;height:10px;background:#a2a2a2;"></div>
<div class="a t" style="top:432px;font-size:12.67px;line-height:14px;color:#c6c6c6;left:1019px;width:400px;text-align:center;">15</div>
<div class="a" style="left:1218px;top:449px;width:1px;height:10px;background:#a2a2a2;"></div>
<div class="a t" style="top:432px;font-size:12.67px;line-height:14px;color:#c6c6c6;left:1046.2px;width:400px;text-align:center;">16</div>
<div class="a" style="left:1245px;top:449px;width:1px;height:10px;background:#a2a2a2;"></div>
<div class="a t" style="top:432px;font-size:12.67px;line-height:14px;color:#c6c6c6;left:1073.4px;width:400px;text-align:center;">17</div>
<div class="a" style="left:1272px;top:449px;width:1px;height:10px;background:#a2a2a2;"></div>
<div class="a t" style="top:432px;font-size:12.67px;line-height:14px;color:#c6c6c6;left:1100.6px;width:400px;text-align:center;">18</div>
<div class="a" style="left:1300px;top:449px;width:1px;height:10px;background:#a2a2a2;"></div>
<div class="a t" style="top:432px;font-size:12.67px;line-height:14px;color:#c6c6c6;left:1127.8px;width:400px;text-align:center;">19</div>
<div class="a" style="left:1327px;top:449px;width:1px;height:10px;background:#a2a2a2;"></div>
<div class="a t" style="top:432px;font-size:12.67px;line-height:14px;color:#c6c6c6;left:1155px;width:400px;text-align:center;">20</div>
<div class="a" style="left:1354px;top:449px;width:1px;height:10px;background:#a2a2a2;"></div>
<div class="a t" style="top:432px;font-size:12.67px;line-height:14px;color:#c6c6c6;left:1182.2px;width:400px;text-align:center;">21</div>
<div class="a" style="left:1381px;top:449px;width:1px;height:10px;background:#a2a2a2;"></div>
<div class="a t" style="top:432px;font-size:12.67px;line-height:14px;color:#c6c6c6;left:1209.4px;width:400px;text-align:center;">22</div>
<div class="a" style="left:1408px;top:449px;width:1px;height:10px;background:#a2a2a2;"></div>
<div class="a t" style="top:432px;font-size:12.67px;line-height:14px;color:#c6c6c6;left:1236.6px;width:400px;text-align:center;">23</div>
<div class="a" style="left:1435px;top:449px;width:1px;height:10px;background:#a2a2a2;"></div>
<div class="a t" style="top:432px;font-size:12.67px;line-height:14px;color:#c6c6c6;left:1263.8px;width:400px;text-align:center;">24</div>
<div class="a" style="left:1462px;top:449px;width:1px;height:10px;background:#a2a2a2;"></div>
<div class="a" style="left:676px;top:465px;width:823px;height:1px;background:#3a3b3f;"></div>
<div class="a" style="left:676px;top:498px;width:823px;height:1px;background:#3a3b3f;"></div>
<div class="a" style="left:676px;top:531px;width:823px;height:1px;background:#3a3b3f;"></div>
<div class="a" style="left:676px;top:564px;width:823px;height:1px;background:#3a3b3f;"></div>
<div class="a" style="left:676px;top:597px;width:823px;height:1px;background:#3a3b3f;"></div>
<div class="a" style="left:676px;top:630px;width:823px;height:1px;background:#3a3b3f;"></div>
<div class="a" style="left:676px;top:663px;width:823px;height:1px;background:#3a3b3f;"></div>
<div class="a" style="left:676px;top:696px;width:823px;height:1px;background:#3a3b3f;"></div>
<div class="a" style="left:811px;top:470.4px;width:653px;height:23.6px;background:#323337;border-radius:5px;"></div>
<div class="a t" style="top:474px;font-size:14.78px;line-height:16px;color:#e2e2e2;letter-spacing:-0.159px;left:716.35px;">Sunday</div>
<div class="a" style="left:811px;top:503.4px;width:653px;height:23.6px;background:#323337;border-radius:5px;"></div>
<div class="a t" style="top:507px;font-size:14.78px;line-height:16px;color:#e2e2e2;letter-spacing:0.354px;left:713.85px;">Monday</div>
<div class="a" style="left:811px;top:536.4px;width:653px;height:23.6px;background:#323337;border-radius:5px;"></div>
<div class="a t" style="top:540px;font-size:14.78px;line-height:16px;color:#e2e2e2;letter-spacing:-0.516px;left:714.5px;">Tuesday</div>
<div class="a" style="left:811px;top:569.4px;width:653px;height:23.6px;background:#323337;border-radius:5px;"></div>
<div class="a t" style="top:573px;font-size:14.78px;line-height:16px;color:#e2e2e2;letter-spacing:-0.027px;left:702.25px;">Wednesday</div>
<div class="a" style="left:811px;top:602.4px;width:653px;height:23.6px;background:#323337;border-radius:5px;"></div>
<div class="a t" style="top:606px;font-size:14.78px;line-height:16px;color:#e2e2e2;letter-spacing:-0.152px;left:710.75px;">Thursday</div>
<div class="a" style="left:811px;top:635.4px;width:653px;height:23.6px;background:#323337;border-radius:5px;"></div>
<div class="a t" style="top:639px;font-size:14.78px;line-height:16px;color:#e2e2e2;letter-spacing:-0.246px;left:721.1px;">Friday</div>
<div class="a" style="left:811px;top:668.4px;width:653px;height:23.6px;background:#323337;border-radius:5px;"></div>
<div class="a t" style="top:672px;font-size:14.78px;line-height:16px;color:#e2e2e2;letter-spacing:-0.087px;left:711.75px;">Saturday</div>
<div class="a" style="left:676px;top:712px;width:225px;height:24px;background:#4a90e8;border-radius:5px;box-shadow:0 1.5px 1px rgba(0,0,0,.55);"></div>
<svg class="a" style="left:685px;top:718px;" width="12" height="12" viewBox="0 0 12 12"><path d="M6 0.1V11.9M0.1 6H11.9" stroke="#ffffff" stroke-width="2.2" fill="none"/></svg>
<div class="a t" style="top:716px;font-size:14.78px;line-height:16px;color:#ffffff;letter-spacing:-0.151px;left:718.5px;">Add Special Day Timezone</div>
<div class="a t" style="top:755px;font-size:14.78px;line-height:16px;color:#e2e2e2;letter-spacing:-0.067px;left:698.5px;">special detail</div>
<svg class="a" style="left:791px;top:756px;" width="15" height="15" viewBox="0 0 15 15"><g transform="translate(0.8 0)"><circle cx="7" cy="7" r="7" fill="#ee3640"/><path d="M4 4L10 10M10 4L4 10" stroke="#ffffff" stroke-width="1.3" fill="none"/></g></svg>
<div class="a" style="left:811px;top:751px;width:653px;height:24px;background:#323337;border-radius:5.5px;"></div>
<div class="a" style="left:1138px;top:752.6px;width:189px;height:21px;background:#5aabf0;border-radius:5px;"></div>
<svg class="a" style="left:1474px;top:755px;" width="20" height="21" viewBox="0 0 20 21"><g transform="translate(0.8 0.4)"><rect x="0.95" y="1.15" width="10.8" height="12.9" rx="2" fill="none" stroke="#55a3f2" stroke-width="1.3"/><rect x="5.5" y="5.1" width="12.1" height="13.5" rx="1.6" fill="#55a3f2"/><path d="M8.4 8.8H15.1M8.4 12H15.1M8.4 15.1H15.1" stroke="#222222" stroke-width="1.2"/></g></svg>
<div class="a" style="left:676px;top:779px;width:823px;height:1px;background:#3a3b3f;"></div>
<div class="a" style="left:1519px;top:252px;width:9.2px;height:378.5px;background:#45464c;border-radius:4.6px;"></div>
<svg class="a" style="left:1519px;top:239px;" width="10" height="8" viewBox="0 0 10 8"><g transform="translate(0 0.4)"><path d="M0.8 5.9H8.4L4.6 0.7Z" fill="#45464c" stroke="#45464c" stroke-width="1.2" stroke-linejoin="round"/></g></svg>
<svg class="a" style="left:1519px;top:833px;" width="10" height="8" viewBox="0 0 10 8"><g transform="translate(0 0.4)"><path d="M0.8 1.1H8.4L4.6 6.3Z" fill="#45464c" stroke="#45464c" stroke-width="1.2" stroke-linejoin="round"/></g></svg>
<div class="a" style="left:373px;top:872px;width:177px;height:31px;background:#f82222;border-radius:5px;"></div>
<div class="a t" style="top:880px;font-size:14.78px;line-height:16px;color:#ffffff;letter-spacing:-0.122px;left:404.4px;">Delete the Device</div>
<div class="a" style="left:1341px;top:872px;width:106px;height:31px;border-radius:5px;border:1px solid #4d94e8;"></div>
<div class="a t" style="top:880px;font-size:14.78px;line-height:16px;color:#4d94e8;letter-spacing:-0.474px;left:1372.2px;">Cancel</div>
<div class="a" style="left:1454px;top:872px;width:93px;height:31px;background:#4d94e8;border-radius:5px;"></div>
<div class="a t" style="top:880px;font-size:14.78px;line-height:16px;color:#ffffff;letter-spacing:-1.085px;left:1485.5px;">Save</div>
</body></html>
